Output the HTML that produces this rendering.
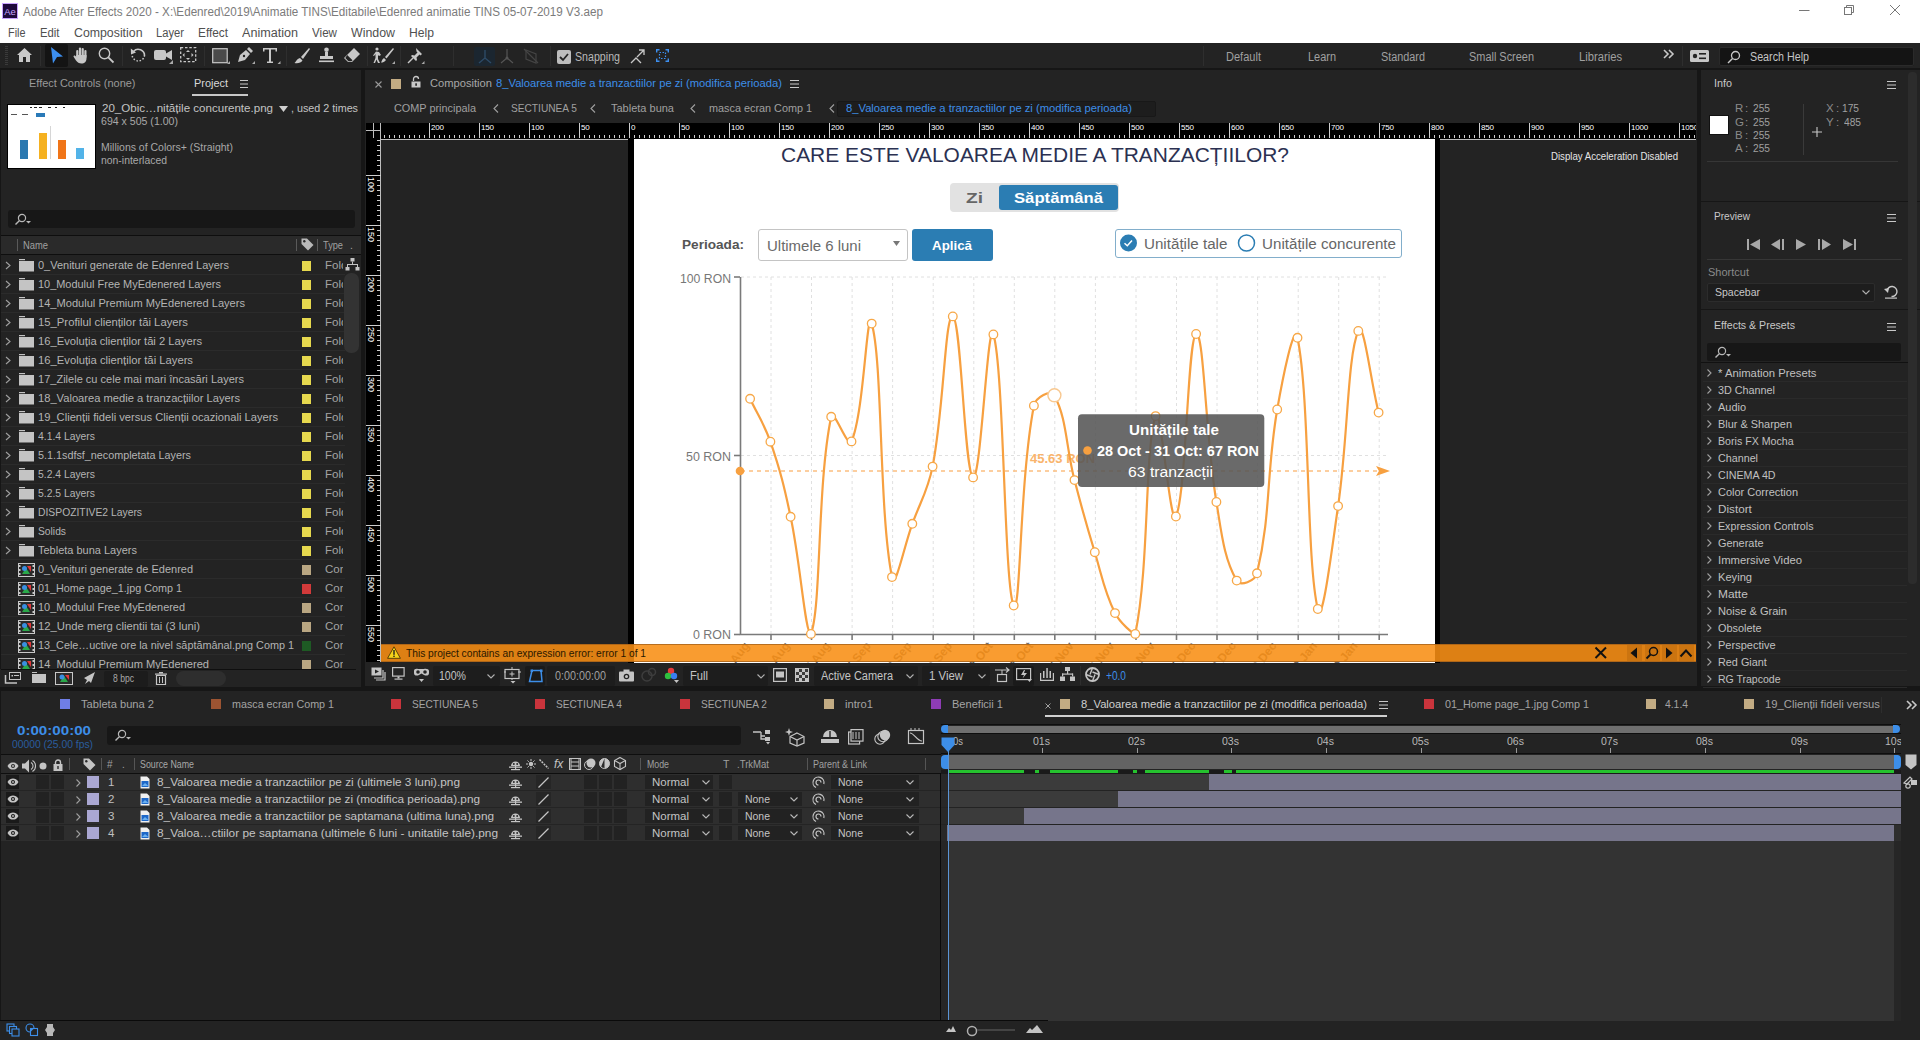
<!DOCTYPE html>
<html><head><meta charset="utf-8">
<style>
*{margin:0;padding:0;box-sizing:border-box}
html,body{width:1920px;height:1040px;overflow:hidden;background:#161616;font-family:"Liberation Sans",sans-serif;font-size:12px;color:#a8a8a8;position:relative}
.a{position:absolute}
.t{position:absolute;white-space:nowrap;line-height:1;transform-origin:0 0}
svg.a{overflow:visible}
#t1{transform:scaleX(0.9480)}#t2{transform:scaleX(0.8826)}#t3{transform:scaleX(0.9197)}#t4{transform:scaleX(1.0021)}#t5{transform:scaleX(0.9101)}#t6{transform:scaleX(0.9610)}#t7{transform:scaleX(1.0240)}#t8{transform:scaleX(0.9456)}#t9{transform:scaleX(1.0057)}#t10{transform:scaleX(0.9883)}#t11{transform:scaleX(0.8872)}#t12{transform:scaleX(0.9203)}#t13{transform:scaleX(0.9120)}#t14{transform:scaleX(0.9034)}#t15{transform:scaleX(0.9107)}#t16{transform:scaleX(0.9341)}#t17{transform:scaleX(0.8933)}#t18{transform:scaleX(0.9538)}#t19{transform:scaleX(0.9498)}#t20{transform:scaleX(1.0055)}#t21{transform:scaleX(0.9358)}#t22{transform:scaleX(0.9192)}#t23{transform:scaleX(0.9118)}#t24{transform:scaleX(0.9055)}#t25{transform:scaleX(0.8924)}#t26{transform:scaleX(0.8785)}#t28{transform:scaleX(0.9544)}#t30{transform:scaleX(0.9510)}#t32{transform:scaleX(0.9638)}#t34{transform:scaleX(0.9818)}#t36{transform:scaleX(0.9755)}#t38{transform:scaleX(0.9777)}#t40{transform:scaleX(0.9592)}#t42{transform:scaleX(0.9703)}#t44{transform:scaleX(0.9702)}#t46{transform:scaleX(0.9005)}#t48{transform:scaleX(0.9385)}#t50{transform:scaleX(0.9005)}#t52{transform:scaleX(0.9005)}#t54{transform:scaleX(0.8990)}#t56{transform:scaleX(0.8938)}#t58{transform:scaleX(0.9558)}#t60{transform:scaleX(0.9544)}#t62{transform:scaleX(0.9385)}#t64{transform:scaleX(0.9502)}#t66{transform:scaleX(0.9823)}#t68{transform:scaleX(0.9423)}#t70{transform:scaleX(0.9658)}#t72{transform:scaleX(0.8175)}#t73{transform:scaleX(0.9699)}#t74{transform:scaleX(0.9754)}#t75{transform:scaleX(0.9456)}#t76{transform:scaleX(0.8826)}#t77{transform:scaleX(0.9564)}#t78{transform:scaleX(0.9424)}#t79{transform:scaleX(0.9754)}#t80{transform:scaleX(0.9181)}#t81{transform:scaleX(1.0692)}#t82{transform:scaleX(1.2740)}#t83{transform:scaleX(1.1118)}#t84{transform:scaleX(1.0076)}#t85{transform:scaleX(1.0689)}#t86{transform:scaleX(0.9873)}#t87{transform:scaleX(1.0825)}#t88{transform:scaleX(1.0828)}#t89{transform:scaleX(1.0811)}#t90{transform:scaleX(1.0307)}#t91{transform:scaleX(1.1261)}#t92{transform:scaleX(0.9409)}#t93{transform:scaleX(0.9581)}#t94{transform:scaleX(0.9564)}#t95{transform:scaleX(0.9280)}#t96{transform:scaleX(0.8794)}#t97{transform:scaleX(0.8992)}#t98{transform:scaleX(0.9305)}#t99{transform:scaleX(0.9148)}#t100{transform:scaleX(0.9494)}#t101{transform:scaleX(0.8438)}#t102{transform:scaleX(0.9381)}#t105{transform:scaleX(0.8860)}#t108{transform:scaleX(0.8860)}#t111{transform:scaleX(0.8860)}#t114{transform:scaleX(0.8860)}#t117{transform:scaleX(0.8860)}#t120{transform:scaleX(0.8860)}#t121{transform:scaleX(0.8801)}#t122{transform:scaleX(0.9573)}#t123{transform:scaleX(0.9140)}#t124{transform:scaleX(0.9205)}#t125{transform:scaleX(0.9815)}#t126{transform:scaleX(0.9385)}#t127{transform:scaleX(0.9517)}#t128{transform:scaleX(0.9487)}#t129{transform:scaleX(0.9241)}#t130{transform:scaleX(0.9336)}#t131{transform:scaleX(0.9290)}#t132{transform:scaleX(0.9554)}#t133{transform:scaleX(1.0170)}#t134{transform:scaleX(0.9280)}#t135{transform:scaleX(0.9488)}#t136{transform:scaleX(0.9832)}#t137{transform:scaleX(0.9667)}#t138{transform:scaleX(1.0360)}#t139{transform:scaleX(0.9638)}#t140{transform:scaleX(0.9472)}#t141{transform:scaleX(0.9585)}#t142{transform:scaleX(0.9424)}#t143{transform:scaleX(0.9137)}#t144{transform:scaleX(0.9675)}#t145{transform:scaleX(0.9332)}#t146{transform:scaleX(0.8826)}#t147{transform:scaleX(0.8826)}#t148{transform:scaleX(0.8826)}#t149{transform:scaleX(0.9729)}#t150{transform:scaleX(0.9611)}#t151{transform:scaleX(0.9754)}#t152{transform:scaleX(0.9385)}#t153{transform:scaleX(0.8992)}#t154{transform:scaleX(0.9777)}#t155{transform:scaleX(1.1470)}#t156{transform:scaleX(0.9393)}#t159{transform:scaleX(0.8411)}#t161{transform:scaleX(0.8376)}#t163{transform:scaleX(0.9090)}#t164{transform:scaleX(0.8565)}#t166{transform:scaleX(1.0267)}#t167{transform:scaleX(0.9983)}#t168{transform:scaleX(0.9091)}#t170{transform:scaleX(1.0235)}#t171{transform:scaleX(0.9983)}#t172{transform:scaleX(0.9091)}#t173{transform:scaleX(0.9091)}#t175{transform:scaleX(1.0243)}#t176{transform:scaleX(0.9983)}#t177{transform:scaleX(0.9091)}#t178{transform:scaleX(0.9091)}#t180{transform:scaleX(1.0305)}#t181{transform:scaleX(0.9983)}#t182{transform:scaleX(0.9091)}#t183{transform:scaleX(0.9091)}#t184{transform:scaleX(0.9014)}#t185{transform:scaleX(1.0037)}#t186{transform:scaleX(1.0037)}#t187{transform:scaleX(1.0037)}#t188{transform:scaleX(1.0037)}#t189{transform:scaleX(1.0037)}#t190{transform:scaleX(1.0037)}#t191{transform:scaleX(1.0037)}#t192{transform:scaleX(1.0037)}#t193{transform:scaleX(1.0037)}#t194{transform:scaleX(1.0037)}
</style></head><body>
<div class="a" style="left:0px;top:0px;width:1920px;height:43px;background:#ffffff;"></div><svg class="a" style="left:2px;top:3px;" width="16" height="16" viewBox="0 0 16 16"><rect x="0.5" y="0.5" width="15" height="15" fill="#1f0a3c" stroke="#c9a3ff" stroke-width="1"/><text x="2.2" y="11.6" font-size="9.5" fill="#c8a8ff" font-family="Liberation Sans">Ae</text></svg><div id="t1" class="t" style="left:23px;top:5.59px;font-size:12.3px;color:#7b7b7b;">Adobe After Effects 2020 - X:\Edenred\2019\Animatie TINS\Editabile\Edenred animatie TINS 05-07-2019 V3.aep</div><div id="t2" class="t" style="left:7.5px;top:26.59px;font-size:12.3px;color:#505050;">File</div><div id="t3" class="t" style="left:39.5px;top:26.59px;font-size:12.3px;color:#505050;">Edit</div><div id="t4" class="t" style="left:73.5px;top:26.59px;font-size:12.3px;color:#505050;">Composition</div><div id="t5" class="t" style="left:156px;top:26.59px;font-size:12.3px;color:#505050;">Layer</div><div id="t6" class="t" style="left:198px;top:26.59px;font-size:12.3px;color:#505050;">Effect</div><div id="t7" class="t" style="left:242px;top:26.59px;font-size:12.3px;color:#505050;">Animation</div><div id="t8" class="t" style="left:312px;top:26.59px;font-size:12.3px;color:#505050;">View</div><div id="t9" class="t" style="left:351px;top:26.59px;font-size:12.3px;color:#505050;">Window</div><div id="t10" class="t" style="left:409px;top:26.59px;font-size:12.3px;color:#505050;">Help</div><svg class="a" style="left:1795px;top:0px;" width="110" height="22" viewBox="0 0 110 22"><line x1="4" y1="10.5" x2="14.5" y2="10.5" stroke="#777" stroke-width="1"/><rect x="49.5" y="7.5" width="7" height="7" fill="none" stroke="#777"/><path d="M51.5 7.5V5.5H58.5V12.5H56.5" fill="none" stroke="#777"/><path d="M95 5L105 15M105 5L95 15" stroke="#777" stroke-width="1"/></svg><div class="a" style="left:0px;top:43px;width:1920px;height:25px;background:#232323;"></div><svg class="a" style="left:5px;top:46px;" width="4" height="20" viewBox="0 0 4 20"><rect x="0" y="0" width="3" height="1" fill="#3a3a3a"/><rect x="0" y="2" width="3" height="1" fill="#3a3a3a"/><rect x="0" y="4" width="3" height="1" fill="#3a3a3a"/><rect x="0" y="6" width="3" height="1" fill="#3a3a3a"/><rect x="0" y="8" width="3" height="1" fill="#3a3a3a"/><rect x="0" y="10" width="3" height="1" fill="#3a3a3a"/><rect x="0" y="12" width="3" height="1" fill="#3a3a3a"/><rect x="0" y="14" width="3" height="1" fill="#3a3a3a"/><rect x="0" y="16" width="3" height="1" fill="#3a3a3a"/><rect x="0" y="18" width="3" height="1" fill="#3a3a3a"/></svg><svg class="a" style="left:16px;top:47px;" width="17" height="17" viewBox="0 0 17 17"><path d="M8.5 1L1 8H3V15H7V10H10V15H14V8H16Z" fill="#c8c8c8"/></svg><div class="a" style="left:40px;top:46px;width:1px;height:20px;background:#2e2e2e;"></div><div class="a" style="left:45px;top:44px;width:23px;height:23px;background:#141414;border-radius:2px"></div><svg class="a" style="left:50px;top:47px;" width="14" height="17" viewBox="0 0 14 17"><path d="M1 0L13 9.5L7 10L3 16.5Z" fill="#3d8ff0"/></svg><svg class="a" style="left:73px;top:47px;" width="16" height="17" viewBox="0 0 16 17"><rect x="3.2" y="3" width="2.2" height="8" rx="1.1" fill="#c8c8c8"/><rect x="5.9" y="0.5" width="2.2" height="9" rx="1.1" fill="#c8c8c8"/><rect x="8.6" y="1" width="2.2" height="9" rx="1.1" fill="#c8c8c8"/><rect x="11.3" y="3" width="2.2" height="8" rx="1.1" fill="#c8c8c8"/><path d="M3.2 8H13.5V11.5C13.5 14.5 11.5 16.5 8.5 16.5C6 16.5 4.5 15.5 3 13.5L0.6 9.8C0.2 9 1.3 8 2.2 8.8L3.5 10Z" fill="#c8c8c8"/></svg><svg class="a" style="left:98px;top:47px;" width="17" height="17" viewBox="0 0 17 17"><circle cx="6.5" cy="6.5" r="5.2" fill="none" stroke="#c8c8c8" stroke-width="1.4"/><line x1="10.3" y1="10.3" x2="15.5" y2="15.5" stroke="#c8c8c8" stroke-width="1.8"/></svg><div class="a" style="left:122px;top:46px;width:1px;height:20px;background:#2e2e2e;"></div><svg class="a" style="left:130px;top:47px;" width="17" height="17" viewBox="0 0 17 17"><path d="M2.2 9A6.3 6.3 0 0 0 14.5 9" fill="none" stroke="#c8c8c8" stroke-width="1.5" stroke-dasharray="1.5 1.7"/><path d="M3.5 4.5A6.3 6.3 0 0 1 14.5 9" fill="none" stroke="#c8c8c8" stroke-width="1.6"/><path d="M0.8 1.5L6 5.5L1 7.5Z" fill="#c8c8c8"/></svg><svg class="a" style="left:154px;top:47px;" width="20" height="18" viewBox="0 0 20 18"><rect x="0" y="3" width="12" height="10" rx="2" fill="#c8c8c8"/><path d="M12 6.5L18 3V13L12 9.5Z" fill="#c8c8c8"/><path d="M19 17V13L15 17Z" fill="#aaa"/></svg><svg class="a" style="left:180px;top:47px;" width="17" height="17" viewBox="0 0 17 17"><rect x="0.7" y="0.7" width="15" height="14" fill="none" stroke="#c8c8c8" stroke-width="1.3" stroke-dasharray="2.5 1.8"/><path d="M8 3L6 5H10ZM8 13L6 11H10ZM2.5 8L4.5 6V10ZM13.5 8L11.5 6V10Z" fill="#c8c8c8"/></svg><div class="a" style="left:204px;top:46px;width:1px;height:20px;background:#2e2e2e;"></div><svg class="a" style="left:212px;top:48px;" width="18" height="17" viewBox="0 0 18 17"><rect x="0.7" y="0.7" width="14.5" height="14" fill="#4a4a4a" stroke="#c8c8c8" stroke-width="1.2"/><path d="M18 16V13L15 16Z" fill="#aaa"/></svg><svg class="a" style="left:236px;top:47px;" width="20" height="18" viewBox="0 0 20 18"><path d="M2 15L4 8L10 3L14 7L9 13Z" fill="#c8c8c8"/><path d="M11 2L13 0L17 4L15 6Z" fill="#c8c8c8"/><circle cx="8" cy="9" r="1.2" fill="#232323"/><path d="M19 17V14L16 17Z" fill="#aaa"/></svg><svg class="a" style="left:262px;top:47px;" width="19" height="18" viewBox="0 0 19 18"><path d="M1 1H15V4.5H13.5V2.6H9V14.5H11V16H5V14.5H7V2.6H2.5V4.5H1Z" fill="#c8c8c8"/><path d="M18.5 17V14L15.5 17Z" fill="#aaa"/></svg><div class="a" style="left:286px;top:46px;width:1px;height:20px;background:#2e2e2e;"></div><svg class="a" style="left:293px;top:47px;" width="18" height="17" viewBox="0 0 18 17"><path d="M16 1L8 10L10 12L17 2Z" fill="#c8c8c8"/><path d="M7 11L9.5 13.5C8 16 5 16.5 1.5 16C3 15 3.5 12 7 11Z" fill="#c8c8c8"/></svg><svg class="a" style="left:318px;top:47px;" width="17" height="17" viewBox="0 0 17 17"><circle cx="8.5" cy="2.8" r="2.3" fill="#c8c8c8"/><path d="M7 5H10V9H15V12H2V9H7Z" fill="#c8c8c8"/><rect x="1" y="13.5" width="15" height="1.6" fill="#c8c8c8"/></svg><svg class="a" style="left:343px;top:47px;" width="18" height="17" viewBox="0 0 18 17"><path d="M11 1L17 7L9 15H5L1 11Z" fill="#c8c8c8"/><path d="M4.2 8L9.5 13.3L8.5 14.3H5.5L2.3 11Z" fill="#232323"/></svg><div class="a" style="left:367px;top:46px;width:1px;height:20px;background:#2e2e2e;"></div><svg class="a" style="left:373px;top:47px;" width="23" height="18" viewBox="0 0 23 18"><circle cx="4" cy="2" r="1.6" fill="#c8c8c8"/><path d="M3 4.5L6 5L8 8L6 9L5 8V12L7 16H5L3.5 12.5L2 16H0.5L2.5 11V7L1 9L0 8.5Z" fill="#c8c8c8"/><path d="M20 1L12 10L13.5 11.5L21 2Z" fill="#c8c8c8"/><path d="M11 11L13 13C11.5 15 10 15.5 8 15.5C9 14 9 12 11 11Z" fill="#c8c8c8"/><path d="M22 17V14L19 17Z" fill="#aaa"/></svg><div class="a" style="left:400px;top:46px;width:1px;height:20px;background:#2e2e2e;"></div><svg class="a" style="left:407px;top:47px;" width="18" height="18" viewBox="0 0 18 18"><path d="M9 1L15 7L13.5 8.5L12.5 7.5L9.5 10.5L10 13L9 14L4 9L5 8L7.5 8.5L10.5 5.5L9.5 4.5Z" fill="#c8c8c8"/><line x1="6" y1="11" x2="1" y2="16" stroke="#c8c8c8" stroke-width="1.5"/><path d="M17.5 17V14L14.5 17Z" fill="#aaa"/></svg><div class="a" style="left:453px;top:46px;width:1px;height:20px;background:#2e2e2e;"></div><div class="a" style="left:474px;top:47px;width:21px;height:19px;background:#1b2630;border-radius:2px"></div><svg class="a" style="left:476px;top:48px;" width="18" height="17" viewBox="0 0 18 17"><path d="M9 2V10L3 15M9 10L15 15" fill="none" stroke="#2c4a66" stroke-width="1.4"/></svg><svg class="a" style="left:499px;top:48px;" width="16" height="17" viewBox="0 0 16 17"><path d="M8 1V10L2 15M8 10L14 15" fill="none" stroke="#555" stroke-width="1.2"/><circle cx="8" cy="10" r="1.5" fill="#555"/></svg><svg class="a" style="left:523px;top:48px;" width="16" height="17" viewBox="0 0 16 17"><path d="M3 2L13 6V15L3 11Z" fill="none" stroke="#444" stroke-width="1.2"/><path d="M1 1L15 15" stroke="#444" stroke-width="1.2"/></svg><div class="a" style="left:550px;top:46px;width:1px;height:20px;background:#2e2e2e;"></div><svg class="a" style="left:557px;top:50px;" width="14" height="14" viewBox="0 0 14 14"><rect x="0" y="0" width="14" height="14" rx="2" fill="#bdbdbd"/><path d="M3 7L6 10L11 4" fill="none" stroke="#232323" stroke-width="1.8"/></svg><div id="t11" class="t" style="left:575px;top:50.84px;font-size:12px;color:#b8b8b8;">Snapping</div><svg class="a" style="left:630px;top:49px;" width="16" height="16" viewBox="0 0 16 16"><path d="M1 14L6 9L11 14" fill="none" stroke="#c8c8c8" stroke-width="1.3"/><path d="M7 8L14 1M9 1H14V6" fill="none" stroke="#c8c8c8" stroke-width="1.3"/></svg><svg class="a" style="left:656px;top:49px;" width="13" height="13" viewBox="0 0 13 13"><path d="M0.7 3.5V0.7H3.5M9.5 0.7H12.3V3.5M12.3 9.5V12.3H9.5M3.5 12.3H0.7V9.5" fill="none" stroke="#3d8ff0" stroke-width="1.4"/><rect x="3.5" y="3.5" width="6" height="6" fill="none" stroke="#3d8ff0" stroke-width="1.2" stroke-dasharray="1.5 1.5"/></svg><div class="a" style="left:1203px;top:46px;width:1px;height:20px;background:#2e2e2e;"></div><div id="t12" class="t" style="left:1226px;top:50.84px;font-size:12px;color:#a0a0a0;">Default</div><div id="t13" class="t" style="left:1308px;top:50.84px;font-size:12px;color:#a0a0a0;">Learn</div><div id="t14" class="t" style="left:1381px;top:50.84px;font-size:12px;color:#a0a0a0;">Standard</div><div id="t15" class="t" style="left:1469px;top:50.84px;font-size:12px;color:#a0a0a0;">Small Screen</div><div id="t16" class="t" style="left:1579px;top:50.84px;font-size:12px;color:#a0a0a0;">Libraries</div><svg class="a" style="left:1663px;top:49px;" width="11" height="10" viewBox="0 0 11 10"><path d="M1 1L5 5L1 9M6 1L10 5L6 9" fill="none" stroke="#c8c8c8" stroke-width="1.6"/></svg><div class="a" style="left:1682px;top:46px;width:1px;height:20px;background:#2e2e2e;"></div><svg class="a" style="left:1690px;top:50px;" width="19" height="13" viewBox="0 0 19 13"><rect x="0" y="0" width="19" height="12" rx="1.5" fill="#c8c8c8"/><circle cx="5" cy="6" r="2.2" fill="#232323"/><rect x="9" y="3" width="7" height="1.6" fill="#232323"/><rect x="9" y="7.5" width="7" height="1.6" fill="#232323"/></svg><div class="a" style="left:1719px;top:47px;width:195px;height:19px;background:#141414;border-radius:2px;border:1px solid #2a2a2a"></div><svg class="a" style="left:1727px;top:50px;" width="14" height="14" viewBox="0 0 14 14"><circle cx="8.5" cy="5.5" r="4" fill="none" stroke="#c8c8c8" stroke-width="1.3"/><line x1="5.5" y1="8.5" x2="1" y2="13" stroke="#c8c8c8" stroke-width="1.5"/></svg><div id="t17" class="t" style="left:1750px;top:50.84px;font-size:12px;color:#c4c4c4;">Search Help</div><div class="a" style="left:0px;top:68px;width:1920px;height:2px;background:#161616;"></div><div class="a" style="left:0px;top:70px;width:361px;height:617px;background:#232323;"></div><div class="a" style="left:0px;top:70px;width:1px;height:617px;background:#161616;"></div><div id="t18" class="t" style="left:28.5px;top:78.27px;font-size:11.5px;color:#9a9a9a;">Effect Controls (none)</div><div id="t19" class="t" style="left:194px;top:78.27px;font-size:11.5px;color:#d8d8d8;">Project</div><div class="a" style="left:192px;top:94px;width:56px;height:2px;background:#c8c8c8;"></div><svg class="a" style="left:240px;top:80px;" width="8" height="8" viewBox="0 0 8 8"><path d="M0 0.5H8M0 4H8M0 7.5H8" stroke="#c8c8c8" stroke-width="1"/></svg><div class="a" style="left:7px;top:103.5px;width:89px;height:65px;background:#000;"></div><div class="a" style="left:8px;top:104.5px;width:87px;height:63px;background:#fff;"></div><svg class="a" style="left:8px;top:104.5px;" width="87" height="63" viewBox="0 0 87 63"><g fill="#222"><rect x="22" y="2" width="2" height="1"/><rect x="26" y="2" width="3" height="1"/><rect x="31" y="2" width="3" height="1"/><rect x="40" y="2" width="3" height="1"/><rect x="47" y="2" width="2" height="1"/><rect x="55" y="2" width="2" height="1"/></g><rect x="28" y="8" width="9" height="4" fill="#2a7ab8"/><rect x="3" y="9" width="6" height="1" fill="#555"/><rect x="14" y="9" width="6" height="1" fill="#555"/><rect x="12" y="35" width="8" height="19" fill="#2a78b0"/><rect x="31" y="28" width="8" height="26" fill="#f5b120"/><rect x="50" y="35" width="8" height="19" fill="#f07518"/><rect x="68" y="43" width="8" height="11" fill="#52b3e8"/><rect x="42" y="21" width="0.6" height="33" fill="#bbb"/></svg><div id="t20" class="t" style="left:102px;top:102.77px;font-size:11.5px;color:#c4c4c4;">20_Obic…nitățile concurente.png</div><svg class="a" style="left:279px;top:106px;" width="9" height="6" viewBox="0 0 9 6"><path d="M0 0H9L4.5 6Z" fill="#d0d0d0"/></svg><div id="t21" class="t" style="left:291px;top:102.77px;font-size:11.5px;color:#c4c4c4;">, used 2 times</div><div id="t22" class="t" style="left:101px;top:116.27px;font-size:11.5px;color:#a8a8a8;">694 x 505 (1.00)</div><div id="t23" class="t" style="left:101px;top:142.27px;font-size:11.5px;color:#a8a8a8;">Millions of Colors+ (Straight)</div><div id="t24" class="t" style="left:101px;top:155.27px;font-size:11.5px;color:#a8a8a8;">non-interlaced</div><div class="a" style="left:8px;top:210px;width:347px;height:18px;background:#171717;border-radius:3px"></div><svg class="a" style="left:14px;top:213px;" width="18" height="13" viewBox="0 0 18 13"><circle cx="8" cy="5" r="3.6" fill="none" stroke="#b8b8b8" stroke-width="1.2"/><line x1="5.3" y1="7.7" x2="1.5" y2="11.5" stroke="#b8b8b8" stroke-width="1.4"/><path d="M12 8H17L14.5 10.5Z" fill="#b8b8b8"/></svg><div class="a" style="left:1px;top:235px;width:360px;height:20px;background:#2a2a2a;border-top:1px solid #0e0e0e;border-bottom:1px solid #0e0e0e"></div><div class="a" style="left:17px;top:239px;width:1px;height:12px;background:#5a5a5a;"></div><div id="t25" class="t" style="left:23px;top:240.11px;font-size:10.5px;color:#a0a0a0;">Name</div><div class="a" style="left:296px;top:239px;width:1px;height:12px;background:#5a5a5a;"></div><div class="a" style="left:317px;top:239px;width:1px;height:12px;background:#5a5a5a;"></div><svg class="a" style="left:301px;top:238px;" width="13" height="13" viewBox="0 0 13 13"><path d="M0.5 0.5H6L12.5 7L7 12.5L0.5 6Z" fill="#b8b8b8"/><circle cx="3.3" cy="3.3" r="1.2" fill="#2a2a2a"/></svg><div id="t26" class="t" style="left:323px;top:240.11px;font-size:10.5px;color:#a0a0a0;">Type</div><div id="t27" class="t" style="left:350px;top:240.11px;font-size:10.5px;color:#a0a0a0;">.</div><div class="a" style="left:0;top:255px;width:345px;height:414px;overflow:hidden"><div class="a" style="left:1px;top:0.5px;width:344px;height:19px;border-bottom:1px solid #2b2b2b"></div><svg class="a" style="left:5px;top:5.5px" width="6" height="9"><path d="M1 1L5 4.5L1 8" fill="none" stroke="#a0a0a0" stroke-width="1.1"/></svg><svg class="a" style="left:19px;top:3.5px" width="15" height="13"><rect x="0" y="0" width="6" height="1.2" fill="#c4c4c4"/><rect x="0" y="2" width="15" height="10.5" fill="#c4c4c4"/></svg><div class="a" style="left:302px;top:5.5px;width:9px;height:10px;background:#e6d84e"></div><div class="a" style="left:1px;top:19.5px;width:344px;height:19px;border-bottom:1px solid #2b2b2b"></div><svg class="a" style="left:5px;top:24.5px" width="6" height="9"><path d="M1 1L5 4.5L1 8" fill="none" stroke="#a0a0a0" stroke-width="1.1"/></svg><svg class="a" style="left:19px;top:22.5px" width="15" height="13"><rect x="0" y="0" width="6" height="1.2" fill="#c4c4c4"/><rect x="0" y="2" width="15" height="10.5" fill="#c4c4c4"/></svg><div class="a" style="left:302px;top:24.5px;width:9px;height:10px;background:#e6d84e"></div><div class="a" style="left:1px;top:38.5px;width:344px;height:19px;border-bottom:1px solid #2b2b2b"></div><svg class="a" style="left:5px;top:43.5px" width="6" height="9"><path d="M1 1L5 4.5L1 8" fill="none" stroke="#a0a0a0" stroke-width="1.1"/></svg><svg class="a" style="left:19px;top:41.5px" width="15" height="13"><rect x="0" y="0" width="6" height="1.2" fill="#c4c4c4"/><rect x="0" y="2" width="15" height="10.5" fill="#c4c4c4"/></svg><div class="a" style="left:302px;top:43.5px;width:9px;height:10px;background:#e6d84e"></div><div class="a" style="left:1px;top:57.5px;width:344px;height:19px;border-bottom:1px solid #2b2b2b"></div><svg class="a" style="left:5px;top:62.5px" width="6" height="9"><path d="M1 1L5 4.5L1 8" fill="none" stroke="#a0a0a0" stroke-width="1.1"/></svg><svg class="a" style="left:19px;top:60.5px" width="15" height="13"><rect x="0" y="0" width="6" height="1.2" fill="#c4c4c4"/><rect x="0" y="2" width="15" height="10.5" fill="#c4c4c4"/></svg><div class="a" style="left:302px;top:62.5px;width:9px;height:10px;background:#e6d84e"></div><div class="a" style="left:1px;top:76.5px;width:344px;height:19px;border-bottom:1px solid #2b2b2b"></div><svg class="a" style="left:5px;top:81.5px" width="6" height="9"><path d="M1 1L5 4.5L1 8" fill="none" stroke="#a0a0a0" stroke-width="1.1"/></svg><svg class="a" style="left:19px;top:79.5px" width="15" height="13"><rect x="0" y="0" width="6" height="1.2" fill="#c4c4c4"/><rect x="0" y="2" width="15" height="10.5" fill="#c4c4c4"/></svg><div class="a" style="left:302px;top:81.5px;width:9px;height:10px;background:#e6d84e"></div><div class="a" style="left:1px;top:95.5px;width:344px;height:19px;border-bottom:1px solid #2b2b2b"></div><svg class="a" style="left:5px;top:100.5px" width="6" height="9"><path d="M1 1L5 4.5L1 8" fill="none" stroke="#a0a0a0" stroke-width="1.1"/></svg><svg class="a" style="left:19px;top:98.5px" width="15" height="13"><rect x="0" y="0" width="6" height="1.2" fill="#c4c4c4"/><rect x="0" y="2" width="15" height="10.5" fill="#c4c4c4"/></svg><div class="a" style="left:302px;top:100.5px;width:9px;height:10px;background:#e6d84e"></div><div class="a" style="left:1px;top:114.5px;width:344px;height:19px;border-bottom:1px solid #2b2b2b"></div><svg class="a" style="left:5px;top:119.5px" width="6" height="9"><path d="M1 1L5 4.5L1 8" fill="none" stroke="#a0a0a0" stroke-width="1.1"/></svg><svg class="a" style="left:19px;top:117.5px" width="15" height="13"><rect x="0" y="0" width="6" height="1.2" fill="#c4c4c4"/><rect x="0" y="2" width="15" height="10.5" fill="#c4c4c4"/></svg><div class="a" style="left:302px;top:119.5px;width:9px;height:10px;background:#e6d84e"></div><div class="a" style="left:1px;top:133.5px;width:344px;height:19px;border-bottom:1px solid #2b2b2b"></div><svg class="a" style="left:5px;top:138.5px" width="6" height="9"><path d="M1 1L5 4.5L1 8" fill="none" stroke="#a0a0a0" stroke-width="1.1"/></svg><svg class="a" style="left:19px;top:136.5px" width="15" height="13"><rect x="0" y="0" width="6" height="1.2" fill="#c4c4c4"/><rect x="0" y="2" width="15" height="10.5" fill="#c4c4c4"/></svg><div class="a" style="left:302px;top:138.5px;width:9px;height:10px;background:#e6d84e"></div><div class="a" style="left:1px;top:152.5px;width:344px;height:19px;border-bottom:1px solid #2b2b2b"></div><svg class="a" style="left:5px;top:157.5px" width="6" height="9"><path d="M1 1L5 4.5L1 8" fill="none" stroke="#a0a0a0" stroke-width="1.1"/></svg><svg class="a" style="left:19px;top:155.5px" width="15" height="13"><rect x="0" y="0" width="6" height="1.2" fill="#c4c4c4"/><rect x="0" y="2" width="15" height="10.5" fill="#c4c4c4"/></svg><div class="a" style="left:302px;top:157.5px;width:9px;height:10px;background:#e6d84e"></div><div class="a" style="left:1px;top:171.5px;width:344px;height:19px;border-bottom:1px solid #2b2b2b"></div><svg class="a" style="left:5px;top:176.5px" width="6" height="9"><path d="M1 1L5 4.5L1 8" fill="none" stroke="#a0a0a0" stroke-width="1.1"/></svg><svg class="a" style="left:19px;top:174.5px" width="15" height="13"><rect x="0" y="0" width="6" height="1.2" fill="#c4c4c4"/><rect x="0" y="2" width="15" height="10.5" fill="#c4c4c4"/></svg><div class="a" style="left:302px;top:176.5px;width:9px;height:10px;background:#e6d84e"></div><div class="a" style="left:1px;top:190.5px;width:344px;height:19px;border-bottom:1px solid #2b2b2b"></div><svg class="a" style="left:5px;top:195.5px" width="6" height="9"><path d="M1 1L5 4.5L1 8" fill="none" stroke="#a0a0a0" stroke-width="1.1"/></svg><svg class="a" style="left:19px;top:193.5px" width="15" height="13"><rect x="0" y="0" width="6" height="1.2" fill="#c4c4c4"/><rect x="0" y="2" width="15" height="10.5" fill="#c4c4c4"/></svg><div class="a" style="left:302px;top:195.5px;width:9px;height:10px;background:#e6d84e"></div><div class="a" style="left:1px;top:209.5px;width:344px;height:19px;border-bottom:1px solid #2b2b2b"></div><svg class="a" style="left:5px;top:214.5px" width="6" height="9"><path d="M1 1L5 4.5L1 8" fill="none" stroke="#a0a0a0" stroke-width="1.1"/></svg><svg class="a" style="left:19px;top:212.5px" width="15" height="13"><rect x="0" y="0" width="6" height="1.2" fill="#c4c4c4"/><rect x="0" y="2" width="15" height="10.5" fill="#c4c4c4"/></svg><div class="a" style="left:302px;top:214.5px;width:9px;height:10px;background:#e6d84e"></div><div class="a" style="left:1px;top:228.5px;width:344px;height:19px;border-bottom:1px solid #2b2b2b"></div><svg class="a" style="left:5px;top:233.5px" width="6" height="9"><path d="M1 1L5 4.5L1 8" fill="none" stroke="#a0a0a0" stroke-width="1.1"/></svg><svg class="a" style="left:19px;top:231.5px" width="15" height="13"><rect x="0" y="0" width="6" height="1.2" fill="#c4c4c4"/><rect x="0" y="2" width="15" height="10.5" fill="#c4c4c4"/></svg><div class="a" style="left:302px;top:233.5px;width:9px;height:10px;background:#e6d84e"></div><div class="a" style="left:1px;top:247.5px;width:344px;height:19px;border-bottom:1px solid #2b2b2b"></div><svg class="a" style="left:5px;top:252.5px" width="6" height="9"><path d="M1 1L5 4.5L1 8" fill="none" stroke="#a0a0a0" stroke-width="1.1"/></svg><svg class="a" style="left:19px;top:250.5px" width="15" height="13"><rect x="0" y="0" width="6" height="1.2" fill="#c4c4c4"/><rect x="0" y="2" width="15" height="10.5" fill="#c4c4c4"/></svg><div class="a" style="left:302px;top:252.5px;width:9px;height:10px;background:#e6d84e"></div><div class="a" style="left:1px;top:266.5px;width:344px;height:19px;border-bottom:1px solid #2b2b2b"></div><svg class="a" style="left:5px;top:271.5px" width="6" height="9"><path d="M1 1L5 4.5L1 8" fill="none" stroke="#a0a0a0" stroke-width="1.1"/></svg><svg class="a" style="left:19px;top:269.5px" width="15" height="13"><rect x="0" y="0" width="6" height="1.2" fill="#c4c4c4"/><rect x="0" y="2" width="15" height="10.5" fill="#c4c4c4"/></svg><div class="a" style="left:302px;top:271.5px;width:9px;height:10px;background:#e6d84e"></div><div class="a" style="left:1px;top:285.5px;width:344px;height:19px;border-bottom:1px solid #2b2b2b"></div><svg class="a" style="left:5px;top:290.5px" width="6" height="9"><path d="M1 1L5 4.5L1 8" fill="none" stroke="#a0a0a0" stroke-width="1.1"/></svg><svg class="a" style="left:19px;top:288.5px" width="15" height="13"><rect x="0" y="0" width="6" height="1.2" fill="#c4c4c4"/><rect x="0" y="2" width="15" height="10.5" fill="#c4c4c4"/></svg><div class="a" style="left:302px;top:290.5px;width:9px;height:10px;background:#e6d84e"></div><div class="a" style="left:1px;top:304.5px;width:344px;height:19px;border-bottom:1px solid #2b2b2b"></div><svg class="a" style="left:18px;top:307.5px" width="17" height="14"><rect x="0.5" y="0.5" width="16" height="13" fill="#2a2a2a" stroke="#c8c8c8"/><rect x="0" y="2" width="2.5" height="2" fill="#c8c8c8"/><rect x="0" y="6" width="2.5" height="2" fill="#c8c8c8"/><rect x="0" y="10" width="2.5" height="2" fill="#c8c8c8"/><rect x="14.5" y="2" width="2.5" height="2" fill="#c8c8c8"/><rect x="14.5" y="6" width="2.5" height="2" fill="#c8c8c8"/><rect x="14.5" y="10" width="2.5" height="2" fill="#c8c8c8"/><path d="M4 11L8 5L12 11Z" fill="#2aa84a"/><circle cx="6.5" cy="5.5" r="2.5" fill="#3a8fe0"/><path d="M9 3H13V9Z" fill="#e0383a"/></svg><div class="a" style="left:302px;top:309.5px;width:9px;height:10px;background:#b9a682"></div><div class="a" style="left:1px;top:323.5px;width:344px;height:19px;border-bottom:1px solid #2b2b2b"></div><svg class="a" style="left:18px;top:326.5px" width="17" height="14"><rect x="0.5" y="0.5" width="16" height="13" fill="#2a2a2a" stroke="#c8c8c8"/><rect x="0" y="2" width="2.5" height="2" fill="#c8c8c8"/><rect x="0" y="6" width="2.5" height="2" fill="#c8c8c8"/><rect x="0" y="10" width="2.5" height="2" fill="#c8c8c8"/><rect x="14.5" y="2" width="2.5" height="2" fill="#c8c8c8"/><rect x="14.5" y="6" width="2.5" height="2" fill="#c8c8c8"/><rect x="14.5" y="10" width="2.5" height="2" fill="#c8c8c8"/><path d="M4 11L8 5L12 11Z" fill="#2aa84a"/><circle cx="6.5" cy="5.5" r="2.5" fill="#3a8fe0"/><path d="M9 3H13V9Z" fill="#e0383a"/></svg><div class="a" style="left:302px;top:328.5px;width:9px;height:10px;background:#d23a3a"></div><div class="a" style="left:1px;top:342.5px;width:344px;height:19px;border-bottom:1px solid #2b2b2b"></div><svg class="a" style="left:18px;top:345.5px" width="17" height="14"><rect x="0.5" y="0.5" width="16" height="13" fill="#2a2a2a" stroke="#c8c8c8"/><rect x="0" y="2" width="2.5" height="2" fill="#c8c8c8"/><rect x="0" y="6" width="2.5" height="2" fill="#c8c8c8"/><rect x="0" y="10" width="2.5" height="2" fill="#c8c8c8"/><rect x="14.5" y="2" width="2.5" height="2" fill="#c8c8c8"/><rect x="14.5" y="6" width="2.5" height="2" fill="#c8c8c8"/><rect x="14.5" y="10" width="2.5" height="2" fill="#c8c8c8"/><path d="M4 11L8 5L12 11Z" fill="#2aa84a"/><circle cx="6.5" cy="5.5" r="2.5" fill="#3a8fe0"/><path d="M9 3H13V9Z" fill="#e0383a"/></svg><div class="a" style="left:302px;top:347.5px;width:9px;height:10px;background:#b9a682"></div><div class="a" style="left:1px;top:361.5px;width:344px;height:19px;border-bottom:1px solid #2b2b2b"></div><svg class="a" style="left:18px;top:364.5px" width="17" height="14"><rect x="0.5" y="0.5" width="16" height="13" fill="#2a2a2a" stroke="#c8c8c8"/><rect x="0" y="2" width="2.5" height="2" fill="#c8c8c8"/><rect x="0" y="6" width="2.5" height="2" fill="#c8c8c8"/><rect x="0" y="10" width="2.5" height="2" fill="#c8c8c8"/><rect x="14.5" y="2" width="2.5" height="2" fill="#c8c8c8"/><rect x="14.5" y="6" width="2.5" height="2" fill="#c8c8c8"/><rect x="14.5" y="10" width="2.5" height="2" fill="#c8c8c8"/><path d="M4 11L8 5L12 11Z" fill="#2aa84a"/><circle cx="6.5" cy="5.5" r="2.5" fill="#3a8fe0"/><path d="M9 3H13V9Z" fill="#e0383a"/></svg><div class="a" style="left:302px;top:366.5px;width:9px;height:10px;background:#b9a682"></div><div class="a" style="left:1px;top:380.5px;width:344px;height:19px;border-bottom:1px solid #2b2b2b"></div><svg class="a" style="left:18px;top:383.5px" width="17" height="14"><rect x="0.5" y="0.5" width="16" height="13" fill="#2a2a2a" stroke="#c8c8c8"/><rect x="0" y="2" width="2.5" height="2" fill="#c8c8c8"/><rect x="0" y="6" width="2.5" height="2" fill="#c8c8c8"/><rect x="0" y="10" width="2.5" height="2" fill="#c8c8c8"/><rect x="14.5" y="2" width="2.5" height="2" fill="#c8c8c8"/><rect x="14.5" y="6" width="2.5" height="2" fill="#c8c8c8"/><rect x="14.5" y="10" width="2.5" height="2" fill="#c8c8c8"/><path d="M4 11L8 5L12 11Z" fill="#2aa84a"/><circle cx="6.5" cy="5.5" r="2.5" fill="#3a8fe0"/><path d="M9 3H13V9Z" fill="#e0383a"/></svg><div class="a" style="left:302px;top:385.5px;width:9px;height:10px;background:#1e5a24"></div><div class="a" style="left:1px;top:399.5px;width:344px;height:19px;border-bottom:1px solid #2b2b2b"></div><svg class="a" style="left:18px;top:402.5px" width="17" height="14"><rect x="0.5" y="0.5" width="16" height="13" fill="#2a2a2a" stroke="#c8c8c8"/><rect x="0" y="2" width="2.5" height="2" fill="#c8c8c8"/><rect x="0" y="6" width="2.5" height="2" fill="#c8c8c8"/><rect x="0" y="10" width="2.5" height="2" fill="#c8c8c8"/><rect x="14.5" y="2" width="2.5" height="2" fill="#c8c8c8"/><rect x="14.5" y="6" width="2.5" height="2" fill="#c8c8c8"/><rect x="14.5" y="10" width="2.5" height="2" fill="#c8c8c8"/><path d="M4 11L8 5L12 11Z" fill="#2aa84a"/><circle cx="6.5" cy="5.5" r="2.5" fill="#3a8fe0"/><path d="M9 3H13V9Z" fill="#e0383a"/></svg><div class="a" style="left:302px;top:404.5px;width:9px;height:10px;background:#b9a682"></div></div><div id="t28" class="t" style="left:38px;top:259.77px;font-size:11.5px;color:#b4b4b4;clip-path:inset(-5px -5px -5px -5px)">0_Venituri generate de Edenred Layers</div><div id="t29" class="t" style="left:325px;top:259.77px;font-size:11.5px;color:#a4a4a4;width:18px;overflow:hidden">Fold</div><div id="t30" class="t" style="left:38px;top:278.77px;font-size:11.5px;color:#b4b4b4;clip-path:inset(-5px -5px -5px -5px)">10_Modulul Free MyEdenered Layers</div><div id="t31" class="t" style="left:325px;top:278.77px;font-size:11.5px;color:#a4a4a4;width:18px;overflow:hidden">Fold</div><div id="t32" class="t" style="left:38px;top:297.77px;font-size:11.5px;color:#b4b4b4;clip-path:inset(-5px -5px -5px -5px)">14_Modulul Premium MyEdenered Layers</div><div id="t33" class="t" style="left:325px;top:297.77px;font-size:11.5px;color:#a4a4a4;width:18px;overflow:hidden">Fold</div><div id="t34" class="t" style="left:38px;top:316.77px;font-size:11.5px;color:#b4b4b4;clip-path:inset(-5px -5px -5px -5px)">15_Profilul clienților tăi Layers</div><div id="t35" class="t" style="left:325px;top:316.77px;font-size:11.5px;color:#a4a4a4;width:18px;overflow:hidden">Fold</div><div id="t36" class="t" style="left:38px;top:335.77px;font-size:11.5px;color:#b4b4b4;clip-path:inset(-5px -5px -5px -5px)">16_Evoluția clienților tăi 2 Layers</div><div id="t37" class="t" style="left:325px;top:335.77px;font-size:11.5px;color:#a4a4a4;width:18px;overflow:hidden">Fold</div><div id="t38" class="t" style="left:38px;top:354.77px;font-size:11.5px;color:#b4b4b4;clip-path:inset(-5px -5px -5px -5px)">16_Evoluția clienților tăi Layers</div><div id="t39" class="t" style="left:325px;top:354.77px;font-size:11.5px;color:#a4a4a4;width:18px;overflow:hidden">Fold</div><div id="t40" class="t" style="left:38px;top:373.77px;font-size:11.5px;color:#b4b4b4;clip-path:inset(-5px -5px -5px -5px)">17_Zilele cu cele mai mari încasări Layers</div><div id="t41" class="t" style="left:325px;top:373.77px;font-size:11.5px;color:#a4a4a4;width:18px;overflow:hidden">Fold</div><div id="t42" class="t" style="left:38px;top:392.77px;font-size:11.5px;color:#b4b4b4;clip-path:inset(-5px -5px -5px -5px)">18_Valoarea medie a tranzacțiilor Layers</div><div id="t43" class="t" style="left:325px;top:392.77px;font-size:11.5px;color:#a4a4a4;width:18px;overflow:hidden">Fold</div><div id="t44" class="t" style="left:38px;top:411.77px;font-size:11.5px;color:#b4b4b4;clip-path:inset(-5px -5px -5px -5px)">19_Clienții fideli versus Clienții ocazionali Layers</div><div id="t45" class="t" style="left:325px;top:411.77px;font-size:11.5px;color:#a4a4a4;width:18px;overflow:hidden">Fold</div><div id="t46" class="t" style="left:38px;top:430.77px;font-size:11.5px;color:#b4b4b4;clip-path:inset(-5px -5px -5px -5px)">4.1.4 Layers</div><div id="t47" class="t" style="left:325px;top:430.77px;font-size:11.5px;color:#a4a4a4;width:18px;overflow:hidden">Fold</div><div id="t48" class="t" style="left:38px;top:449.77px;font-size:11.5px;color:#b4b4b4;clip-path:inset(-5px -5px -5px -5px)">5.1.1sdfsf_necompletata Layers</div><div id="t49" class="t" style="left:325px;top:449.77px;font-size:11.5px;color:#a4a4a4;width:18px;overflow:hidden">Fold</div><div id="t50" class="t" style="left:38px;top:468.77px;font-size:11.5px;color:#b4b4b4;clip-path:inset(-5px -5px -5px -5px)">5.2.4 Layers</div><div id="t51" class="t" style="left:325px;top:468.77px;font-size:11.5px;color:#a4a4a4;width:18px;overflow:hidden">Fold</div><div id="t52" class="t" style="left:38px;top:487.77px;font-size:11.5px;color:#b4b4b4;clip-path:inset(-5px -5px -5px -5px)">5.2.5 Layers</div><div id="t53" class="t" style="left:325px;top:487.77px;font-size:11.5px;color:#a4a4a4;width:18px;overflow:hidden">Fold</div><div id="t54" class="t" style="left:38px;top:506.77px;font-size:11.5px;color:#b4b4b4;clip-path:inset(-5px -5px -5px -5px)">DISPOZITIVE2 Layers</div><div id="t55" class="t" style="left:325px;top:506.77px;font-size:11.5px;color:#a4a4a4;width:18px;overflow:hidden">Fold</div><div id="t56" class="t" style="left:38px;top:525.77px;font-size:11.5px;color:#b4b4b4;clip-path:inset(-5px -5px -5px -5px)">Solids</div><div id="t57" class="t" style="left:325px;top:525.77px;font-size:11.5px;color:#a4a4a4;width:18px;overflow:hidden">Fold</div><div id="t58" class="t" style="left:38px;top:544.77px;font-size:11.5px;color:#b4b4b4;clip-path:inset(-5px -5px -5px -5px)">Tebleta buna Layers</div><div id="t59" class="t" style="left:325px;top:544.77px;font-size:11.5px;color:#a4a4a4;width:18px;overflow:hidden">Fold</div><div id="t60" class="t" style="left:38px;top:563.77px;font-size:11.5px;color:#b4b4b4;clip-path:inset(-5px -5px -5px -5px)">0_Venituri generate de Edenred</div><div id="t61" class="t" style="left:325px;top:563.77px;font-size:11.5px;color:#a4a4a4;width:18px;overflow:hidden">Comp</div><div id="t62" class="t" style="left:38px;top:582.77px;font-size:11.5px;color:#b4b4b4;clip-path:inset(-5px -5px -5px -5px)">01_Home page_1.jpg Comp 1</div><div id="t63" class="t" style="left:325px;top:582.77px;font-size:11.5px;color:#a4a4a4;width:18px;overflow:hidden">Comp</div><div id="t64" class="t" style="left:38px;top:601.77px;font-size:11.5px;color:#b4b4b4;clip-path:inset(-5px -5px -5px -5px)">10_Modulul Free MyEdenered</div><div id="t65" class="t" style="left:325px;top:601.77px;font-size:11.5px;color:#a4a4a4;width:18px;overflow:hidden">Comp</div><div id="t66" class="t" style="left:38px;top:620.77px;font-size:11.5px;color:#b4b4b4;clip-path:inset(-5px -5px -5px -5px)">12_Unde merg clientii tai (3 luni)</div><div id="t67" class="t" style="left:325px;top:620.77px;font-size:11.5px;color:#a4a4a4;width:18px;overflow:hidden">Comp</div><div id="t68" class="t" style="left:38px;top:639.77px;font-size:11.5px;color:#b4b4b4;clip-path:inset(-5px -5px -5px -5px)">13_Cele…uctive ore la nivel săptămânal.png Comp 1</div><div id="t69" class="t" style="left:325px;top:639.77px;font-size:11.5px;color:#a4a4a4;width:18px;overflow:hidden">Comp</div><div id="t70" class="t" style="left:38px;top:658.77px;font-size:11.5px;color:#b4b4b4;clip-path:inset(-5px -5px -5px -5px)">14_Modulul Premium MyEdenered</div><div id="t71" class="t" style="left:325px;top:658.77px;font-size:11.5px;color:#a4a4a4;width:18px;overflow:hidden">Comp</div><div class="a" style="left:0px;top:669px;width:361px;height:18px;background:#232323;"></div><div class="a" style="left:1px;top:669px;width:355px;height:1px;background:#0f0f0f;"></div><div class="a" style="left:345px;top:257px;width:13px;height:412px;background:#232323;"></div><div class="a" style="left:344px;top:273px;width:15px;height:80px;background:#333333;border-radius:7px"></div><svg class="a" style="left:346px;top:258px;" width="13" height="13" viewBox="0 0 13 13"><rect x="4.5" y="0" width="4" height="3.5" fill="#c4c4c4"/><rect x="6" y="3.5" width="1" height="3" fill="#c4c4c4"/><rect x="1" y="6" width="11" height="1" fill="#c4c4c4"/><rect x="1" y="6" width="1" height="3" fill="#c4c4c4"/><rect x="11" y="6" width="1" height="3" fill="#c4c4c4"/><rect x="-0.5" y="9" width="4" height="3.5" fill="#c4c4c4"/><rect x="9.5" y="9" width="4" height="3.5" fill="#c4c4c4"/></svg><svg class="a" style="left:5px;top:672px;" width="16" height="13" viewBox="0 0 16 13"><rect x="4.5" y="0.5" width="11" height="7" fill="none" stroke="#c4c4c4"/><rect x="6.5" y="3" width="1.5" height="1.5" fill="#c4c4c4"/><rect x="9" y="3" width="5" height="1" fill="#c4c4c4"/><path d="M0.5 3V11H12" fill="none" stroke="#c4c4c4" stroke-width="1.5"/></svg><svg class="a" style="left:32px;top:672px;" width="14" height="11" viewBox="0 0 14 11"><rect x="0" y="0" width="5" height="1" fill="#c4c4c4"/><rect x="0" y="2" width="14" height="9" fill="#c4c4c4"/></svg><svg class="a" style="left:55px;top:672px;" width="18" height="13" viewBox="0 0 18 13"><rect x="0.5" y="0.5" width="17" height="12" fill="#2a2a2a" stroke="#c8c8c8"/><path d="M5 10L9 4L13 10Z" fill="#2aa84a"/><circle cx="7" cy="5" r="2.5" fill="#3a8fe0"/><path d="M10 3H14V8Z" fill="#e0383a"/></svg><svg class="a" style="left:82px;top:672px;" width="14" height="13" viewBox="0 0 14 13"><path d="M13 0L2 6L5 8L3 12L7 9L9 11Z" fill="#c4c4c4"/></svg><div class="a" style="left:104px;top:671px;width:44px;height:16px;background:#1c1c1c;border-radius:2px"></div><div id="t72" class="t" style="left:113px;top:673.11px;font-size:10.5px;color:#a8a8a8;">8 bpc</div><svg class="a" style="left:155px;top:672px;" width="12" height="13" viewBox="0 0 12 13"><rect x="0" y="1.5" width="12" height="1.2" fill="#c4c4c4"/><rect x="4" y="0" width="4" height="1.5" fill="#c4c4c4"/><path d="M1.5 3.5H10.5V12.5H1.5Z" fill="none" stroke="#c4c4c4" stroke-width="1.2"/><path d="M4.5 5V11M7.5 5V11" stroke="#c4c4c4"/></svg><div class="a" style="left:176px;top:671px;width:50px;height:15px;background:#2e2e2e;border-radius:8px"></div><div class="a" style="left:365px;top:70px;width:1332px;height:617px;background:#232323;"></div><svg class="a" style="left:375px;top:81px;" width="7" height="7" viewBox="0 0 7 7"><path d="M0.5 0.5L6.5 6.5M6.5 0.5L0.5 6.5" stroke="#9a9a9a" stroke-width="1.1"/></svg><div class="a" style="left:391px;top:79px;width:10px;height:10px;background:#c2ab83;"></div><svg class="a" style="left:411px;top:76px;" width="10" height="12" viewBox="0 0 10 12"><path d="M2.5 5V3a2.5 2.5 0 0 1 5 0" fill="none" stroke="#c8c8c8" stroke-width="1.3"/><rect x="0.5" y="5.5" width="9" height="6" fill="#c8c8c8"/><rect x="4.3" y="7.3" width="1.6" height="2.5" fill="#232323"/></svg><div id="t73" class="t" style="left:430px;top:78.27px;font-size:11.5px;color:#a8a8a8;">Composition</div><div id="t74" class="t" style="left:496px;top:78.27px;font-size:11.5px;color:#3d8ee8;">8_Valoarea medie a tranzactiilor pe zi (modifica perioada)</div><svg class="a" style="left:790px;top:80px;" width="9" height="8" viewBox="0 0 9 8"><path d="M0 0.5H9M0 4H9M0 7.5H9" stroke="#c8c8c8" stroke-width="1"/></svg><div id="t75" class="t" style="left:394px;top:102.97px;font-size:11.5px;color:#a0a0a0;">COMP principala</div><div id="t76" class="t" style="left:511px;top:102.97px;font-size:11.5px;color:#a0a0a0;">SECTIUNEA 5</div><div id="t77" class="t" style="left:611px;top:102.97px;font-size:11.5px;color:#a0a0a0;">Tableta buna</div><div id="t78" class="t" style="left:709px;top:102.97px;font-size:11.5px;color:#a0a0a0;">masca ecran Comp 1</div><svg class="a" style="left:493px;top:104px;" width="6" height="9" viewBox="0 0 6 9"><path d="M5 0.5L1 4.5L5 8.5" fill="none" stroke="#a0a0a0" stroke-width="1.1"/></svg><svg class="a" style="left:590px;top:104px;" width="6" height="9" viewBox="0 0 6 9"><path d="M5 0.5L1 4.5L5 8.5" fill="none" stroke="#a0a0a0" stroke-width="1.1"/></svg><svg class="a" style="left:690px;top:104px;" width="6" height="9" viewBox="0 0 6 9"><path d="M5 0.5L1 4.5L5 8.5" fill="none" stroke="#a0a0a0" stroke-width="1.1"/></svg><svg class="a" style="left:829px;top:104px;" width="6" height="9" viewBox="0 0 6 9"><path d="M5 0.5L1 4.5L5 8.5" fill="none" stroke="#a0a0a0" stroke-width="1.1"/></svg><div class="a" style="left:836.5px;top:100.8px;width:319px;height:16px;background:#1d1d1d;border:1px solid #181818;border-radius:2px"></div><div id="t79" class="t" style="left:846px;top:102.97px;font-size:11.5px;color:#3d8ee8;">8_Valoarea medie a tranzactiilor pe zi (modifica perioada)</div><div class="a" style="left:366px;top:123px;width:1330px;height:16px;background:#000;"></div><div class="a" style="left:366px;top:138.5px;width:1330px;height:1px;background:#bdbdbd;"></div><div class="a" style="left:366px;top:139px;width:15px;height:523px;background:#000;"></div><div class="a" style="left:380px;top:123px;width:1px;height:539px;background:#bdbdbd;"></div><svg class="a" style="left:366px;top:123px;overflow:hidden" width="1330" height="16" viewBox="0 0 1330 16"><rect x="18" y="12" width="1" height="3" fill="#cfcfcf"/><rect x="23" y="12" width="1" height="3" fill="#cfcfcf"/><rect x="28" y="12" width="1" height="3" fill="#cfcfcf"/><rect x="33" y="12" width="1" height="3" fill="#cfcfcf"/><rect x="38" y="12" width="1" height="3" fill="#cfcfcf"/><rect x="43" y="12" width="1" height="3" fill="#cfcfcf"/><rect x="48" y="12" width="1" height="3" fill="#cfcfcf"/><rect x="53" y="12" width="1" height="3" fill="#cfcfcf"/><rect x="58" y="12" width="1" height="3" fill="#cfcfcf"/><rect x="63" y="0" width="1" height="15" fill="#cfcfcf"/><rect x="68" y="12" width="1" height="3" fill="#cfcfcf"/><rect x="73" y="12" width="1" height="3" fill="#cfcfcf"/><rect x="78" y="12" width="1" height="3" fill="#cfcfcf"/><rect x="83" y="12" width="1" height="3" fill="#cfcfcf"/><rect x="88" y="12" width="1" height="3" fill="#cfcfcf"/><rect x="93" y="12" width="1" height="3" fill="#cfcfcf"/><rect x="98" y="12" width="1" height="3" fill="#cfcfcf"/><rect x="103" y="12" width="1" height="3" fill="#cfcfcf"/><rect x="108" y="12" width="1" height="3" fill="#cfcfcf"/><rect x="113" y="0" width="1" height="15" fill="#cfcfcf"/><rect x="118" y="12" width="1" height="3" fill="#cfcfcf"/><rect x="123" y="12" width="1" height="3" fill="#cfcfcf"/><rect x="128" y="12" width="1" height="3" fill="#cfcfcf"/><rect x="133" y="12" width="1" height="3" fill="#cfcfcf"/><rect x="138" y="12" width="1" height="3" fill="#cfcfcf"/><rect x="143" y="12" width="1" height="3" fill="#cfcfcf"/><rect x="148" y="12" width="1" height="3" fill="#cfcfcf"/><rect x="153" y="12" width="1" height="3" fill="#cfcfcf"/><rect x="158" y="12" width="1" height="3" fill="#cfcfcf"/><rect x="163" y="0" width="1" height="15" fill="#cfcfcf"/><rect x="168" y="12" width="1" height="3" fill="#cfcfcf"/><rect x="173" y="12" width="1" height="3" fill="#cfcfcf"/><rect x="178" y="12" width="1" height="3" fill="#cfcfcf"/><rect x="183" y="12" width="1" height="3" fill="#cfcfcf"/><rect x="188" y="12" width="1" height="3" fill="#cfcfcf"/><rect x="193" y="12" width="1" height="3" fill="#cfcfcf"/><rect x="198" y="12" width="1" height="3" fill="#cfcfcf"/><rect x="203" y="12" width="1" height="3" fill="#cfcfcf"/><rect x="208" y="12" width="1" height="3" fill="#cfcfcf"/><rect x="213" y="0" width="1" height="15" fill="#cfcfcf"/><rect x="218" y="12" width="1" height="3" fill="#cfcfcf"/><rect x="223" y="12" width="1" height="3" fill="#cfcfcf"/><rect x="228" y="12" width="1" height="3" fill="#cfcfcf"/><rect x="233" y="12" width="1" height="3" fill="#cfcfcf"/><rect x="238" y="12" width="1" height="3" fill="#cfcfcf"/><rect x="243" y="12" width="1" height="3" fill="#cfcfcf"/><rect x="248" y="12" width="1" height="3" fill="#cfcfcf"/><rect x="253" y="12" width="1" height="3" fill="#cfcfcf"/><rect x="258" y="12" width="1" height="3" fill="#cfcfcf"/><rect x="263" y="0" width="1" height="15" fill="#cfcfcf"/><rect x="268" y="12" width="1" height="3" fill="#cfcfcf"/><rect x="273" y="12" width="1" height="3" fill="#cfcfcf"/><rect x="278" y="12" width="1" height="3" fill="#cfcfcf"/><rect x="283" y="12" width="1" height="3" fill="#cfcfcf"/><rect x="288" y="12" width="1" height="3" fill="#cfcfcf"/><rect x="293" y="12" width="1" height="3" fill="#cfcfcf"/><rect x="298" y="12" width="1" height="3" fill="#cfcfcf"/><rect x="303" y="12" width="1" height="3" fill="#cfcfcf"/><rect x="308" y="12" width="1" height="3" fill="#cfcfcf"/><rect x="313" y="0" width="1" height="15" fill="#cfcfcf"/><rect x="318" y="12" width="1" height="3" fill="#cfcfcf"/><rect x="323" y="12" width="1" height="3" fill="#cfcfcf"/><rect x="328" y="12" width="1" height="3" fill="#cfcfcf"/><rect x="333" y="12" width="1" height="3" fill="#cfcfcf"/><rect x="338" y="12" width="1" height="3" fill="#cfcfcf"/><rect x="343" y="12" width="1" height="3" fill="#cfcfcf"/><rect x="348" y="12" width="1" height="3" fill="#cfcfcf"/><rect x="353" y="12" width="1" height="3" fill="#cfcfcf"/><rect x="358" y="12" width="1" height="3" fill="#cfcfcf"/><rect x="363" y="0" width="1" height="15" fill="#cfcfcf"/><rect x="368" y="12" width="1" height="3" fill="#cfcfcf"/><rect x="373" y="12" width="1" height="3" fill="#cfcfcf"/><rect x="378" y="12" width="1" height="3" fill="#cfcfcf"/><rect x="383" y="12" width="1" height="3" fill="#cfcfcf"/><rect x="388" y="12" width="1" height="3" fill="#cfcfcf"/><rect x="393" y="12" width="1" height="3" fill="#cfcfcf"/><rect x="398" y="12" width="1" height="3" fill="#cfcfcf"/><rect x="403" y="12" width="1" height="3" fill="#cfcfcf"/><rect x="408" y="12" width="1" height="3" fill="#cfcfcf"/><rect x="413" y="0" width="1" height="15" fill="#cfcfcf"/><rect x="418" y="12" width="1" height="3" fill="#cfcfcf"/><rect x="423" y="12" width="1" height="3" fill="#cfcfcf"/><rect x="428" y="12" width="1" height="3" fill="#cfcfcf"/><rect x="433" y="12" width="1" height="3" fill="#cfcfcf"/><rect x="438" y="12" width="1" height="3" fill="#cfcfcf"/><rect x="443" y="12" width="1" height="3" fill="#cfcfcf"/><rect x="448" y="12" width="1" height="3" fill="#cfcfcf"/><rect x="453" y="12" width="1" height="3" fill="#cfcfcf"/><rect x="458" y="12" width="1" height="3" fill="#cfcfcf"/><rect x="463" y="0" width="1" height="15" fill="#cfcfcf"/><rect x="468" y="12" width="1" height="3" fill="#cfcfcf"/><rect x="473" y="12" width="1" height="3" fill="#cfcfcf"/><rect x="478" y="12" width="1" height="3" fill="#cfcfcf"/><rect x="483" y="12" width="1" height="3" fill="#cfcfcf"/><rect x="488" y="12" width="1" height="3" fill="#cfcfcf"/><rect x="493" y="12" width="1" height="3" fill="#cfcfcf"/><rect x="498" y="12" width="1" height="3" fill="#cfcfcf"/><rect x="503" y="12" width="1" height="3" fill="#cfcfcf"/><rect x="508" y="12" width="1" height="3" fill="#cfcfcf"/><rect x="513" y="0" width="1" height="15" fill="#cfcfcf"/><rect x="518" y="12" width="1" height="3" fill="#cfcfcf"/><rect x="523" y="12" width="1" height="3" fill="#cfcfcf"/><rect x="528" y="12" width="1" height="3" fill="#cfcfcf"/><rect x="533" y="12" width="1" height="3" fill="#cfcfcf"/><rect x="538" y="12" width="1" height="3" fill="#cfcfcf"/><rect x="543" y="12" width="1" height="3" fill="#cfcfcf"/><rect x="548" y="12" width="1" height="3" fill="#cfcfcf"/><rect x="553" y="12" width="1" height="3" fill="#cfcfcf"/><rect x="558" y="12" width="1" height="3" fill="#cfcfcf"/><rect x="563" y="0" width="1" height="15" fill="#cfcfcf"/><rect x="568" y="12" width="1" height="3" fill="#cfcfcf"/><rect x="573" y="12" width="1" height="3" fill="#cfcfcf"/><rect x="578" y="12" width="1" height="3" fill="#cfcfcf"/><rect x="583" y="12" width="1" height="3" fill="#cfcfcf"/><rect x="588" y="12" width="1" height="3" fill="#cfcfcf"/><rect x="593" y="12" width="1" height="3" fill="#cfcfcf"/><rect x="598" y="12" width="1" height="3" fill="#cfcfcf"/><rect x="603" y="12" width="1" height="3" fill="#cfcfcf"/><rect x="608" y="12" width="1" height="3" fill="#cfcfcf"/><rect x="613" y="0" width="1" height="15" fill="#cfcfcf"/><rect x="618" y="12" width="1" height="3" fill="#cfcfcf"/><rect x="623" y="12" width="1" height="3" fill="#cfcfcf"/><rect x="628" y="12" width="1" height="3" fill="#cfcfcf"/><rect x="633" y="12" width="1" height="3" fill="#cfcfcf"/><rect x="638" y="12" width="1" height="3" fill="#cfcfcf"/><rect x="643" y="12" width="1" height="3" fill="#cfcfcf"/><rect x="648" y="12" width="1" height="3" fill="#cfcfcf"/><rect x="653" y="12" width="1" height="3" fill="#cfcfcf"/><rect x="658" y="12" width="1" height="3" fill="#cfcfcf"/><rect x="663" y="0" width="1" height="15" fill="#cfcfcf"/><rect x="668" y="12" width="1" height="3" fill="#cfcfcf"/><rect x="673" y="12" width="1" height="3" fill="#cfcfcf"/><rect x="678" y="12" width="1" height="3" fill="#cfcfcf"/><rect x="683" y="12" width="1" height="3" fill="#cfcfcf"/><rect x="688" y="12" width="1" height="3" fill="#cfcfcf"/><rect x="693" y="12" width="1" height="3" fill="#cfcfcf"/><rect x="698" y="12" width="1" height="3" fill="#cfcfcf"/><rect x="703" y="12" width="1" height="3" fill="#cfcfcf"/><rect x="708" y="12" width="1" height="3" fill="#cfcfcf"/><rect x="713" y="0" width="1" height="15" fill="#cfcfcf"/><rect x="718" y="12" width="1" height="3" fill="#cfcfcf"/><rect x="723" y="12" width="1" height="3" fill="#cfcfcf"/><rect x="728" y="12" width="1" height="3" fill="#cfcfcf"/><rect x="733" y="12" width="1" height="3" fill="#cfcfcf"/><rect x="738" y="12" width="1" height="3" fill="#cfcfcf"/><rect x="743" y="12" width="1" height="3" fill="#cfcfcf"/><rect x="748" y="12" width="1" height="3" fill="#cfcfcf"/><rect x="753" y="12" width="1" height="3" fill="#cfcfcf"/><rect x="758" y="12" width="1" height="3" fill="#cfcfcf"/><rect x="763" y="0" width="1" height="15" fill="#cfcfcf"/><rect x="768" y="12" width="1" height="3" fill="#cfcfcf"/><rect x="773" y="12" width="1" height="3" fill="#cfcfcf"/><rect x="778" y="12" width="1" height="3" fill="#cfcfcf"/><rect x="783" y="12" width="1" height="3" fill="#cfcfcf"/><rect x="788" y="12" width="1" height="3" fill="#cfcfcf"/><rect x="793" y="12" width="1" height="3" fill="#cfcfcf"/><rect x="798" y="12" width="1" height="3" fill="#cfcfcf"/><rect x="803" y="12" width="1" height="3" fill="#cfcfcf"/><rect x="808" y="12" width="1" height="3" fill="#cfcfcf"/><rect x="813" y="0" width="1" height="15" fill="#cfcfcf"/><rect x="818" y="12" width="1" height="3" fill="#cfcfcf"/><rect x="823" y="12" width="1" height="3" fill="#cfcfcf"/><rect x="828" y="12" width="1" height="3" fill="#cfcfcf"/><rect x="833" y="12" width="1" height="3" fill="#cfcfcf"/><rect x="838" y="12" width="1" height="3" fill="#cfcfcf"/><rect x="843" y="12" width="1" height="3" fill="#cfcfcf"/><rect x="848" y="12" width="1" height="3" fill="#cfcfcf"/><rect x="853" y="12" width="1" height="3" fill="#cfcfcf"/><rect x="858" y="12" width="1" height="3" fill="#cfcfcf"/><rect x="863" y="0" width="1" height="15" fill="#cfcfcf"/><rect x="868" y="12" width="1" height="3" fill="#cfcfcf"/><rect x="873" y="12" width="1" height="3" fill="#cfcfcf"/><rect x="878" y="12" width="1" height="3" fill="#cfcfcf"/><rect x="883" y="12" width="1" height="3" fill="#cfcfcf"/><rect x="888" y="12" width="1" height="3" fill="#cfcfcf"/><rect x="893" y="12" width="1" height="3" fill="#cfcfcf"/><rect x="898" y="12" width="1" height="3" fill="#cfcfcf"/><rect x="903" y="12" width="1" height="3" fill="#cfcfcf"/><rect x="908" y="12" width="1" height="3" fill="#cfcfcf"/><rect x="913" y="0" width="1" height="15" fill="#cfcfcf"/><rect x="918" y="12" width="1" height="3" fill="#cfcfcf"/><rect x="923" y="12" width="1" height="3" fill="#cfcfcf"/><rect x="928" y="12" width="1" height="3" fill="#cfcfcf"/><rect x="933" y="12" width="1" height="3" fill="#cfcfcf"/><rect x="938" y="12" width="1" height="3" fill="#cfcfcf"/><rect x="943" y="12" width="1" height="3" fill="#cfcfcf"/><rect x="948" y="12" width="1" height="3" fill="#cfcfcf"/><rect x="953" y="12" width="1" height="3" fill="#cfcfcf"/><rect x="958" y="12" width="1" height="3" fill="#cfcfcf"/><rect x="963" y="0" width="1" height="15" fill="#cfcfcf"/><rect x="968" y="12" width="1" height="3" fill="#cfcfcf"/><rect x="973" y="12" width="1" height="3" fill="#cfcfcf"/><rect x="978" y="12" width="1" height="3" fill="#cfcfcf"/><rect x="983" y="12" width="1" height="3" fill="#cfcfcf"/><rect x="988" y="12" width="1" height="3" fill="#cfcfcf"/><rect x="993" y="12" width="1" height="3" fill="#cfcfcf"/><rect x="998" y="12" width="1" height="3" fill="#cfcfcf"/><rect x="1003" y="12" width="1" height="3" fill="#cfcfcf"/><rect x="1008" y="12" width="1" height="3" fill="#cfcfcf"/><rect x="1013" y="0" width="1" height="15" fill="#cfcfcf"/><rect x="1018" y="12" width="1" height="3" fill="#cfcfcf"/><rect x="1023" y="12" width="1" height="3" fill="#cfcfcf"/><rect x="1028" y="12" width="1" height="3" fill="#cfcfcf"/><rect x="1033" y="12" width="1" height="3" fill="#cfcfcf"/><rect x="1038" y="12" width="1" height="3" fill="#cfcfcf"/><rect x="1043" y="12" width="1" height="3" fill="#cfcfcf"/><rect x="1048" y="12" width="1" height="3" fill="#cfcfcf"/><rect x="1053" y="12" width="1" height="3" fill="#cfcfcf"/><rect x="1058" y="12" width="1" height="3" fill="#cfcfcf"/><rect x="1063" y="0" width="1" height="15" fill="#cfcfcf"/><rect x="1068" y="12" width="1" height="3" fill="#cfcfcf"/><rect x="1073" y="12" width="1" height="3" fill="#cfcfcf"/><rect x="1078" y="12" width="1" height="3" fill="#cfcfcf"/><rect x="1083" y="12" width="1" height="3" fill="#cfcfcf"/><rect x="1088" y="12" width="1" height="3" fill="#cfcfcf"/><rect x="1093" y="12" width="1" height="3" fill="#cfcfcf"/><rect x="1098" y="12" width="1" height="3" fill="#cfcfcf"/><rect x="1103" y="12" width="1" height="3" fill="#cfcfcf"/><rect x="1108" y="12" width="1" height="3" fill="#cfcfcf"/><rect x="1113" y="0" width="1" height="15" fill="#cfcfcf"/><rect x="1118" y="12" width="1" height="3" fill="#cfcfcf"/><rect x="1123" y="12" width="1" height="3" fill="#cfcfcf"/><rect x="1128" y="12" width="1" height="3" fill="#cfcfcf"/><rect x="1133" y="12" width="1" height="3" fill="#cfcfcf"/><rect x="1138" y="12" width="1" height="3" fill="#cfcfcf"/><rect x="1143" y="12" width="1" height="3" fill="#cfcfcf"/><rect x="1148" y="12" width="1" height="3" fill="#cfcfcf"/><rect x="1153" y="12" width="1" height="3" fill="#cfcfcf"/><rect x="1158" y="12" width="1" height="3" fill="#cfcfcf"/><rect x="1163" y="0" width="1" height="15" fill="#cfcfcf"/><rect x="1168" y="12" width="1" height="3" fill="#cfcfcf"/><rect x="1173" y="12" width="1" height="3" fill="#cfcfcf"/><rect x="1178" y="12" width="1" height="3" fill="#cfcfcf"/><rect x="1183" y="12" width="1" height="3" fill="#cfcfcf"/><rect x="1188" y="12" width="1" height="3" fill="#cfcfcf"/><rect x="1193" y="12" width="1" height="3" fill="#cfcfcf"/><rect x="1198" y="12" width="1" height="3" fill="#cfcfcf"/><rect x="1203" y="12" width="1" height="3" fill="#cfcfcf"/><rect x="1208" y="12" width="1" height="3" fill="#cfcfcf"/><rect x="1213" y="0" width="1" height="15" fill="#cfcfcf"/><rect x="1218" y="12" width="1" height="3" fill="#cfcfcf"/><rect x="1223" y="12" width="1" height="3" fill="#cfcfcf"/><rect x="1228" y="12" width="1" height="3" fill="#cfcfcf"/><rect x="1233" y="12" width="1" height="3" fill="#cfcfcf"/><rect x="1238" y="12" width="1" height="3" fill="#cfcfcf"/><rect x="1243" y="12" width="1" height="3" fill="#cfcfcf"/><rect x="1248" y="12" width="1" height="3" fill="#cfcfcf"/><rect x="1253" y="12" width="1" height="3" fill="#cfcfcf"/><rect x="1258" y="12" width="1" height="3" fill="#cfcfcf"/><rect x="1263" y="0" width="1" height="15" fill="#cfcfcf"/><rect x="1268" y="12" width="1" height="3" fill="#cfcfcf"/><rect x="1273" y="12" width="1" height="3" fill="#cfcfcf"/><rect x="1278" y="12" width="1" height="3" fill="#cfcfcf"/><rect x="1283" y="12" width="1" height="3" fill="#cfcfcf"/><rect x="1288" y="12" width="1" height="3" fill="#cfcfcf"/><rect x="1293" y="12" width="1" height="3" fill="#cfcfcf"/><rect x="1298" y="12" width="1" height="3" fill="#cfcfcf"/><rect x="1303" y="12" width="1" height="3" fill="#cfcfcf"/><rect x="1308" y="12" width="1" height="3" fill="#cfcfcf"/><rect x="1313" y="0" width="1" height="15" fill="#cfcfcf"/><rect x="1318" y="12" width="1" height="3" fill="#cfcfcf"/><rect x="1323" y="12" width="1" height="3" fill="#cfcfcf"/><rect x="1328" y="12" width="1" height="3" fill="#cfcfcf"/><text x="65" y="6.8" font-size="8" fill="#ffffff" font-family="Liberation Sans" letter-spacing="-0.2">200</text><text x="115" y="6.8" font-size="8" fill="#ffffff" font-family="Liberation Sans" letter-spacing="-0.2">150</text><text x="165" y="6.8" font-size="8" fill="#ffffff" font-family="Liberation Sans" letter-spacing="-0.2">100</text><text x="215" y="6.8" font-size="8" fill="#ffffff" font-family="Liberation Sans" letter-spacing="-0.2">50</text><text x="265" y="6.8" font-size="8" fill="#ffffff" font-family="Liberation Sans" letter-spacing="-0.2">0</text><text x="315" y="6.8" font-size="8" fill="#ffffff" font-family="Liberation Sans" letter-spacing="-0.2">50</text><text x="365" y="6.8" font-size="8" fill="#ffffff" font-family="Liberation Sans" letter-spacing="-0.2">100</text><text x="415" y="6.8" font-size="8" fill="#ffffff" font-family="Liberation Sans" letter-spacing="-0.2">150</text><text x="465" y="6.8" font-size="8" fill="#ffffff" font-family="Liberation Sans" letter-spacing="-0.2">200</text><text x="515" y="6.8" font-size="8" fill="#ffffff" font-family="Liberation Sans" letter-spacing="-0.2">250</text><text x="565" y="6.8" font-size="8" fill="#ffffff" font-family="Liberation Sans" letter-spacing="-0.2">300</text><text x="615" y="6.8" font-size="8" fill="#ffffff" font-family="Liberation Sans" letter-spacing="-0.2">350</text><text x="665" y="6.8" font-size="8" fill="#ffffff" font-family="Liberation Sans" letter-spacing="-0.2">400</text><text x="715" y="6.8" font-size="8" fill="#ffffff" font-family="Liberation Sans" letter-spacing="-0.2">450</text><text x="765" y="6.8" font-size="8" fill="#ffffff" font-family="Liberation Sans" letter-spacing="-0.2">500</text><text x="815" y="6.8" font-size="8" fill="#ffffff" font-family="Liberation Sans" letter-spacing="-0.2">550</text><text x="865" y="6.8" font-size="8" fill="#ffffff" font-family="Liberation Sans" letter-spacing="-0.2">600</text><text x="915" y="6.8" font-size="8" fill="#ffffff" font-family="Liberation Sans" letter-spacing="-0.2">650</text><text x="965" y="6.8" font-size="8" fill="#ffffff" font-family="Liberation Sans" letter-spacing="-0.2">700</text><text x="1015" y="6.8" font-size="8" fill="#ffffff" font-family="Liberation Sans" letter-spacing="-0.2">750</text><text x="1065" y="6.8" font-size="8" fill="#ffffff" font-family="Liberation Sans" letter-spacing="-0.2">800</text><text x="1115" y="6.8" font-size="8" fill="#ffffff" font-family="Liberation Sans" letter-spacing="-0.2">850</text><text x="1165" y="6.8" font-size="8" fill="#ffffff" font-family="Liberation Sans" letter-spacing="-0.2">900</text><text x="1215" y="6.8" font-size="8" fill="#ffffff" font-family="Liberation Sans" letter-spacing="-0.2">950</text><text x="1265" y="6.8" font-size="8" fill="#ffffff" font-family="Liberation Sans" letter-spacing="-0.2">1000</text><text x="1315" y="6.8" font-size="8" fill="#ffffff" font-family="Liberation Sans" letter-spacing="-0.2">1050</text></svg><svg class="a" style="left:366px;top:139px;" width="15" height="523" viewBox="0 0 15 523"><rect x="11" y="1" width="3" height="1" fill="#cfcfcf"/><rect x="11" y="6" width="3" height="1" fill="#cfcfcf"/><rect x="11" y="11" width="3" height="1" fill="#cfcfcf"/><rect x="11" y="16" width="3" height="1" fill="#cfcfcf"/><rect x="11" y="21" width="3" height="1" fill="#cfcfcf"/><rect x="11" y="26" width="3" height="1" fill="#cfcfcf"/><rect x="11" y="31" width="3" height="1" fill="#cfcfcf"/><rect x="0" y="36" width="15" height="1" fill="#cfcfcf"/><text transform="translate(1.5,38) rotate(90)" font-size="9" fill="#fff" font-family="Liberation Sans">100</text><rect x="11" y="41" width="3" height="1" fill="#cfcfcf"/><rect x="11" y="46" width="3" height="1" fill="#cfcfcf"/><rect x="11" y="51" width="3" height="1" fill="#cfcfcf"/><rect x="11" y="56" width="3" height="1" fill="#cfcfcf"/><rect x="11" y="61" width="3" height="1" fill="#cfcfcf"/><rect x="11" y="66" width="3" height="1" fill="#cfcfcf"/><rect x="11" y="71" width="3" height="1" fill="#cfcfcf"/><rect x="11" y="76" width="3" height="1" fill="#cfcfcf"/><rect x="11" y="81" width="3" height="1" fill="#cfcfcf"/><rect x="0" y="86" width="15" height="1" fill="#cfcfcf"/><text transform="translate(1.5,88) rotate(90)" font-size="9" fill="#fff" font-family="Liberation Sans">150</text><rect x="11" y="91" width="3" height="1" fill="#cfcfcf"/><rect x="11" y="96" width="3" height="1" fill="#cfcfcf"/><rect x="11" y="101" width="3" height="1" fill="#cfcfcf"/><rect x="11" y="106" width="3" height="1" fill="#cfcfcf"/><rect x="11" y="111" width="3" height="1" fill="#cfcfcf"/><rect x="11" y="116" width="3" height="1" fill="#cfcfcf"/><rect x="11" y="121" width="3" height="1" fill="#cfcfcf"/><rect x="11" y="126" width="3" height="1" fill="#cfcfcf"/><rect x="11" y="131" width="3" height="1" fill="#cfcfcf"/><rect x="0" y="136" width="15" height="1" fill="#cfcfcf"/><text transform="translate(1.5,138) rotate(90)" font-size="9" fill="#fff" font-family="Liberation Sans">200</text><rect x="11" y="141" width="3" height="1" fill="#cfcfcf"/><rect x="11" y="146" width="3" height="1" fill="#cfcfcf"/><rect x="11" y="151" width="3" height="1" fill="#cfcfcf"/><rect x="11" y="156" width="3" height="1" fill="#cfcfcf"/><rect x="11" y="161" width="3" height="1" fill="#cfcfcf"/><rect x="11" y="166" width="3" height="1" fill="#cfcfcf"/><rect x="11" y="171" width="3" height="1" fill="#cfcfcf"/><rect x="11" y="176" width="3" height="1" fill="#cfcfcf"/><rect x="11" y="181" width="3" height="1" fill="#cfcfcf"/><rect x="0" y="186" width="15" height="1" fill="#cfcfcf"/><text transform="translate(1.5,188) rotate(90)" font-size="9" fill="#fff" font-family="Liberation Sans">250</text><rect x="11" y="191" width="3" height="1" fill="#cfcfcf"/><rect x="11" y="196" width="3" height="1" fill="#cfcfcf"/><rect x="11" y="201" width="3" height="1" fill="#cfcfcf"/><rect x="11" y="206" width="3" height="1" fill="#cfcfcf"/><rect x="11" y="211" width="3" height="1" fill="#cfcfcf"/><rect x="11" y="216" width="3" height="1" fill="#cfcfcf"/><rect x="11" y="221" width="3" height="1" fill="#cfcfcf"/><rect x="11" y="226" width="3" height="1" fill="#cfcfcf"/><rect x="11" y="231" width="3" height="1" fill="#cfcfcf"/><rect x="0" y="236" width="15" height="1" fill="#cfcfcf"/><text transform="translate(1.5,238) rotate(90)" font-size="9" fill="#fff" font-family="Liberation Sans">300</text><rect x="11" y="241" width="3" height="1" fill="#cfcfcf"/><rect x="11" y="246" width="3" height="1" fill="#cfcfcf"/><rect x="11" y="251" width="3" height="1" fill="#cfcfcf"/><rect x="11" y="256" width="3" height="1" fill="#cfcfcf"/><rect x="11" y="261" width="3" height="1" fill="#cfcfcf"/><rect x="11" y="266" width="3" height="1" fill="#cfcfcf"/><rect x="11" y="271" width="3" height="1" fill="#cfcfcf"/><rect x="11" y="276" width="3" height="1" fill="#cfcfcf"/><rect x="11" y="281" width="3" height="1" fill="#cfcfcf"/><rect x="0" y="286" width="15" height="1" fill="#cfcfcf"/><text transform="translate(1.5,288) rotate(90)" font-size="9" fill="#fff" font-family="Liberation Sans">350</text><rect x="11" y="291" width="3" height="1" fill="#cfcfcf"/><rect x="11" y="296" width="3" height="1" fill="#cfcfcf"/><rect x="11" y="301" width="3" height="1" fill="#cfcfcf"/><rect x="11" y="306" width="3" height="1" fill="#cfcfcf"/><rect x="11" y="311" width="3" height="1" fill="#cfcfcf"/><rect x="11" y="316" width="3" height="1" fill="#cfcfcf"/><rect x="11" y="321" width="3" height="1" fill="#cfcfcf"/><rect x="11" y="326" width="3" height="1" fill="#cfcfcf"/><rect x="11" y="331" width="3" height="1" fill="#cfcfcf"/><rect x="0" y="336" width="15" height="1" fill="#cfcfcf"/><text transform="translate(1.5,338) rotate(90)" font-size="9" fill="#fff" font-family="Liberation Sans">400</text><rect x="11" y="341" width="3" height="1" fill="#cfcfcf"/><rect x="11" y="346" width="3" height="1" fill="#cfcfcf"/><rect x="11" y="351" width="3" height="1" fill="#cfcfcf"/><rect x="11" y="356" width="3" height="1" fill="#cfcfcf"/><rect x="11" y="361" width="3" height="1" fill="#cfcfcf"/><rect x="11" y="366" width="3" height="1" fill="#cfcfcf"/><rect x="11" y="371" width="3" height="1" fill="#cfcfcf"/><rect x="11" y="376" width="3" height="1" fill="#cfcfcf"/><rect x="11" y="381" width="3" height="1" fill="#cfcfcf"/><rect x="0" y="386" width="15" height="1" fill="#cfcfcf"/><text transform="translate(1.5,388) rotate(90)" font-size="9" fill="#fff" font-family="Liberation Sans">450</text><rect x="11" y="391" width="3" height="1" fill="#cfcfcf"/><rect x="11" y="396" width="3" height="1" fill="#cfcfcf"/><rect x="11" y="401" width="3" height="1" fill="#cfcfcf"/><rect x="11" y="406" width="3" height="1" fill="#cfcfcf"/><rect x="11" y="411" width="3" height="1" fill="#cfcfcf"/><rect x="11" y="416" width="3" height="1" fill="#cfcfcf"/><rect x="11" y="421" width="3" height="1" fill="#cfcfcf"/><rect x="11" y="426" width="3" height="1" fill="#cfcfcf"/><rect x="11" y="431" width="3" height="1" fill="#cfcfcf"/><rect x="0" y="436" width="15" height="1" fill="#cfcfcf"/><text transform="translate(1.5,438) rotate(90)" font-size="9" fill="#fff" font-family="Liberation Sans">500</text><rect x="11" y="441" width="3" height="1" fill="#cfcfcf"/><rect x="11" y="446" width="3" height="1" fill="#cfcfcf"/><rect x="11" y="451" width="3" height="1" fill="#cfcfcf"/><rect x="11" y="456" width="3" height="1" fill="#cfcfcf"/><rect x="11" y="461" width="3" height="1" fill="#cfcfcf"/><rect x="11" y="466" width="3" height="1" fill="#cfcfcf"/><rect x="11" y="471" width="3" height="1" fill="#cfcfcf"/><rect x="11" y="476" width="3" height="1" fill="#cfcfcf"/><rect x="11" y="481" width="3" height="1" fill="#cfcfcf"/><rect x="0" y="486" width="15" height="1" fill="#cfcfcf"/><text transform="translate(1.5,488) rotate(90)" font-size="9" fill="#fff" font-family="Liberation Sans">550</text><rect x="11" y="491" width="3" height="1" fill="#cfcfcf"/><rect x="11" y="496" width="3" height="1" fill="#cfcfcf"/><rect x="11" y="501" width="3" height="1" fill="#cfcfcf"/><rect x="11" y="506" width="3" height="1" fill="#cfcfcf"/><rect x="11" y="511" width="3" height="1" fill="#cfcfcf"/><rect x="11" y="516" width="3" height="1" fill="#cfcfcf"/><rect x="11" y="521" width="3" height="1" fill="#cfcfcf"/></svg><svg class="a" style="left:366px;top:123px;" width="15" height="16" viewBox="0 0 15 16"><path d="M0 7.5H15M7.5 0V15" stroke="#bdbdbd" stroke-width="1"/></svg><div class="a" style="left:628px;top:139px;width:6px;height:524px;background:#000;"></div><div class="a" style="left:1435px;top:139px;width:5px;height:524px;background:#000;"></div><div class="a" style="left:634px;top:139px;width:801px;height:524px;background:#fff;"></div><div id="t80" class="t" style="left:1551px;top:151.11px;font-size:10.5px;color:#e6e6e6;">Display Acceleration Disabled</div><div id="t81" class="t" style="left:780.5px;top:145.91px;font-size:19.6px;color:#2b3152;">CARE ESTE VALOAREA MEDIE A TRANZACȚIILOR?</div><div class="a" style="left:949.5px;top:183px;width:169px;height:29px;background:#e2e2e2;border-radius:4px"></div><div class="a" style="left:998.5px;top:184.5px;width:119.5px;height:25.5px;background:#2b7db3;border-radius:3px"></div><div id="t82" class="t" style="left:966px;top:190.30px;font-size:15px;color:#666;font-weight:bold;">Zi</div><div id="t83" class="t" style="left:1014px;top:190.30px;font-size:15px;color:#ffffff;font-weight:bold;">Săptămână</div><div id="t84" class="t" style="left:682px;top:237.57px;font-size:13.5px;color:#555;font-weight:bold;">Perioada:</div><div class="a" style="left:757.5px;top:228.7px;width:150px;height:32.3px;background:#fff;border:1px solid #c4c4c4;border-radius:3px"></div><div id="t85" class="t" style="left:767px;top:238.65px;font-size:14px;color:#6a6a6a;">Ultimele 6 luni</div><svg class="a" style="left:893px;top:241px;" width="7" height="5" viewBox="0 0 7 5"><path d="M0 0H7L3.5 5Z" fill="#777"/></svg><div class="a" style="left:911.5px;top:228.7px;width:81.5px;height:32.3px;background:#2b7db3;border-radius:3px"></div><div id="t86" class="t" style="left:932px;top:238.57px;font-size:13.5px;color:#fff;font-weight:bold;">Aplică</div><div class="a" style="left:1114.8px;top:228.9px;width:286.8px;height:28.8px;background:#fff;border:1.5px solid #82aecb;border-radius:3px"></div><svg class="a" style="left:1119px;top:234px;" width="20" height="20" viewBox="0 0 20 20"><circle cx="9.5" cy="9" r="8.5" fill="#2b7db3"/><path d="M5.5 9.2L8.3 11.8L13 6.5" fill="none" stroke="#fff" stroke-width="1.5"/></svg><div id="t87" class="t" style="left:1143.6px;top:236.65px;font-size:14px;color:#666;">Unitățile tale</div><svg class="a" style="left:1237px;top:234px;" width="20" height="20" viewBox="0 0 20 20"><circle cx="9.5" cy="9" r="8" fill="none" stroke="#2b7db3" stroke-width="1.5"/></svg><div id="t88" class="t" style="left:1262px;top:236.65px;font-size:14px;color:#666;">Unitățile concurente</div><svg class="a" style="left:0px;top:0px;" width="1920" height="1040" viewBox="0 0 1920 1040"><line x1="771.0" y1="277" x2="771.0" y2="634" stroke="#e0e0e0" stroke-width="1" stroke-dasharray="3 3"/><line x1="811.5" y1="277" x2="811.5" y2="634" stroke="#e0e0e0" stroke-width="1" stroke-dasharray="3 3"/><line x1="852.1" y1="277" x2="852.1" y2="634" stroke="#e0e0e0" stroke-width="1" stroke-dasharray="3 3"/><line x1="892.6" y1="277" x2="892.6" y2="634" stroke="#e0e0e0" stroke-width="1" stroke-dasharray="3 3"/><line x1="933.2" y1="277" x2="933.2" y2="634" stroke="#e0e0e0" stroke-width="1" stroke-dasharray="3 3"/><line x1="973.8" y1="277" x2="973.8" y2="634" stroke="#e0e0e0" stroke-width="1" stroke-dasharray="3 3"/><line x1="1014.3" y1="277" x2="1014.3" y2="634" stroke="#e0e0e0" stroke-width="1" stroke-dasharray="3 3"/><line x1="1054.8" y1="277" x2="1054.8" y2="634" stroke="#e0e0e0" stroke-width="1" stroke-dasharray="3 3"/><line x1="1095.4" y1="277" x2="1095.4" y2="634" stroke="#e0e0e0" stroke-width="1" stroke-dasharray="3 3"/><line x1="1136.0" y1="277" x2="1136.0" y2="634" stroke="#e0e0e0" stroke-width="1" stroke-dasharray="3 3"/><line x1="1176.5" y1="277" x2="1176.5" y2="634" stroke="#e0e0e0" stroke-width="1" stroke-dasharray="3 3"/><line x1="1217.0" y1="277" x2="1217.0" y2="634" stroke="#e0e0e0" stroke-width="1" stroke-dasharray="3 3"/><line x1="1257.6" y1="277" x2="1257.6" y2="634" stroke="#e0e0e0" stroke-width="1" stroke-dasharray="3 3"/><line x1="1298.2" y1="277" x2="1298.2" y2="634" stroke="#e0e0e0" stroke-width="1" stroke-dasharray="3 3"/><line x1="1338.7" y1="277" x2="1338.7" y2="634" stroke="#e0e0e0" stroke-width="1" stroke-dasharray="3 3"/><line x1="1379.2" y1="277" x2="1379.2" y2="634" stroke="#e0e0e0" stroke-width="1" stroke-dasharray="3 3"/><line x1="741" y1="277" x2="1388" y2="277" stroke="#e0e0e0" stroke-width="1" stroke-dasharray="3 3"/><line x1="741" y1="455.5" x2="1388" y2="455.5" stroke="#e0e0e0" stroke-width="1" stroke-dasharray="3 3"/><path d="M740.5 277V634.5H1388" fill="none" stroke="#7a7a7a" stroke-width="1.6"/><line x1="734" y1="277" x2="740" y2="277" stroke="#7a7a7a" stroke-width="1.6"/><line x1="734" y1="455.5" x2="740" y2="455.5" stroke="#7a7a7a" stroke-width="1.6"/><line x1="734" y1="634.5" x2="740" y2="634.5" stroke="#7a7a7a" stroke-width="1.6"/><line x1="771.0" y1="634" x2="771.0" y2="640" stroke="#7a7a7a" stroke-width="1.6"/><line x1="811.5" y1="634" x2="811.5" y2="640" stroke="#7a7a7a" stroke-width="1.6"/><line x1="852.1" y1="634" x2="852.1" y2="640" stroke="#7a7a7a" stroke-width="1.6"/><line x1="892.6" y1="634" x2="892.6" y2="640" stroke="#7a7a7a" stroke-width="1.6"/><line x1="933.2" y1="634" x2="933.2" y2="640" stroke="#7a7a7a" stroke-width="1.6"/><line x1="973.8" y1="634" x2="973.8" y2="640" stroke="#7a7a7a" stroke-width="1.6"/><line x1="1014.3" y1="634" x2="1014.3" y2="640" stroke="#7a7a7a" stroke-width="1.6"/><line x1="1054.8" y1="634" x2="1054.8" y2="640" stroke="#7a7a7a" stroke-width="1.6"/><line x1="1095.4" y1="634" x2="1095.4" y2="640" stroke="#7a7a7a" stroke-width="1.6"/><line x1="1136.0" y1="634" x2="1136.0" y2="640" stroke="#7a7a7a" stroke-width="1.6"/><line x1="1176.5" y1="634" x2="1176.5" y2="640" stroke="#7a7a7a" stroke-width="1.6"/><line x1="1217.0" y1="634" x2="1217.0" y2="640" stroke="#7a7a7a" stroke-width="1.6"/><line x1="1257.6" y1="634" x2="1257.6" y2="640" stroke="#7a7a7a" stroke-width="1.6"/><line x1="1298.2" y1="634" x2="1298.2" y2="640" stroke="#7a7a7a" stroke-width="1.6"/><line x1="1338.7" y1="634" x2="1338.7" y2="640" stroke="#7a7a7a" stroke-width="1.6"/><line x1="1379.2" y1="634" x2="1379.2" y2="640" stroke="#7a7a7a" stroke-width="1.6"/><text transform="translate(750.0,646) rotate(-52)" text-anchor="end" font-size="12" font-weight="bold" fill="#707070" font-family="Liberation Sans">1 Aug</text><text transform="translate(790.5,646) rotate(-52)" text-anchor="end" font-size="12" font-weight="bold" fill="#707070" font-family="Liberation Sans">8 Aug</text><text transform="translate(831.1,646) rotate(-52)" text-anchor="end" font-size="12" font-weight="bold" fill="#707070" font-family="Liberation Sans">15 Aug</text><text transform="translate(871.6,646) rotate(-52)" text-anchor="end" font-size="12" font-weight="bold" fill="#707070" font-family="Liberation Sans">5 Sep</text><text transform="translate(912.2,646) rotate(-52)" text-anchor="end" font-size="12" font-weight="bold" fill="#707070" font-family="Liberation Sans">12 Sep</text><text transform="translate(952.8,646) rotate(-52)" text-anchor="end" font-size="12" font-weight="bold" fill="#707070" font-family="Liberation Sans">19 Sep</text><text transform="translate(993.3,646) rotate(-52)" text-anchor="end" font-size="12" font-weight="bold" fill="#707070" font-family="Liberation Sans">3 Oct</text><text transform="translate(1033.8,646) rotate(-52)" text-anchor="end" font-size="12" font-weight="bold" fill="#707070" font-family="Liberation Sans">17 Oct</text><text transform="translate(1074.4,646) rotate(-52)" text-anchor="end" font-size="12" font-weight="bold" fill="#707070" font-family="Liberation Sans">7 Nov</text><text transform="translate(1115.0,646) rotate(-52)" text-anchor="end" font-size="12" font-weight="bold" fill="#707070" font-family="Liberation Sans">14 Nov</text><text transform="translate(1155.5,646) rotate(-52)" text-anchor="end" font-size="12" font-weight="bold" fill="#707070" font-family="Liberation Sans">21 Nov</text><text transform="translate(1196.0,646) rotate(-52)" text-anchor="end" font-size="12" font-weight="bold" fill="#707070" font-family="Liberation Sans">5 Dec</text><text transform="translate(1236.6,646) rotate(-52)" text-anchor="end" font-size="12" font-weight="bold" fill="#707070" font-family="Liberation Sans">12 Dec</text><text transform="translate(1277.2,646) rotate(-52)" text-anchor="end" font-size="12" font-weight="bold" fill="#707070" font-family="Liberation Sans">19 Dec</text><text transform="translate(1317.7,646) rotate(-52)" text-anchor="end" font-size="12" font-weight="bold" fill="#707070" font-family="Liberation Sans">2 Jan</text><text transform="translate(1358.2,646) rotate(-52)" text-anchor="end" font-size="12" font-weight="bold" fill="#707070" font-family="Liberation Sans">9 Jan</text><line x1="741" y1="471" x2="1378" y2="471" stroke="#fbbf80" stroke-width="1.6" stroke-dasharray="4 4"/><path d="M1376 466L1390 471L1376 476L1379 471Z" fill="#f7a040"/><circle cx="740" cy="471" r="4.3" fill="#f7a040"/><text x="1030" y="463" font-size="13" fill="#f9b46c" font-weight="bold" font-family="Liberation Sans">45.63 RON</text><path d="M750.1 398.8 C758.2 416.0 764.2 423.8 770.4 441.7 C780.4 471.0 784.2 486.4 790.6 516.8 C800.5 563.3 805.2 634.0 810.9 633.9 C821.4 608.0 817.0 484.0 831.2 416.8 C833.3 407.0 848.1 449.2 851.5 441.4 C864.3 412.0 866.6 306.2 871.7 323.6 C882.8 360.5 878.8 511.7 892.0 577.1 C895.0 591.8 904.4 545.2 912.3 523.8 C920.7 501.0 927.9 490.3 932.6 466.6 C944.1 407.4 945.0 314.3 952.8 316.4 C961.2 318.6 964.5 473.6 973.1 477.4 C980.8 480.8 987.8 316.6 993.4 334.4 C1004.0 367.9 1004.3 589.1 1013.7 605.5 C1020.6 617.6 1019.4 481.2 1033.9 405.7 C1035.6 397.1 1050.9 389.1 1054.2 395.3 C1067.1 418.9 1065.8 446.3 1074.5 480.1 C1082.0 509.1 1086.0 523.6 1094.8 552.2 C1102.2 576.8 1103.9 590.6 1115.0 613.1 C1120.1 623.3 1133.4 634.0 1135.3 633.9 C1149.6 564.3 1144.5 448.1 1155.6 416.1 C1160.8 401.1 1170.1 528.3 1175.9 516.5 C1186.3 495.4 1187.7 337.0 1196.1 334.0 C1203.9 331.2 1205.4 435.3 1216.4 502.0 C1221.7 534.0 1223.9 558.1 1236.7 580.6 C1240.1 586.6 1255.1 581.2 1257.0 573.3 C1271.3 512.8 1266.1 474.4 1277.2 409.5 C1282.3 380.2 1294.0 320.6 1297.5 337.8 C1310.2 400.4 1306.1 560.4 1317.8 609.0 C1322.3 627.7 1332.0 547.6 1338.1 506.1 C1348.2 436.3 1347.3 356.2 1358.3 330.9 C1363.6 318.8 1370.5 379.9 1378.6 412.6" fill="none" stroke="#f7a040" stroke-width="2.2"/><g fill="#fff" stroke="#f7a848" stroke-width="1.3"><circle cx="750.1" cy="398.8" r="4.3"/><circle cx="770.4" cy="441.7" r="4.3"/><circle cx="790.6" cy="516.8" r="4.3"/><circle cx="810.9" cy="633.9" r="4.3"/><circle cx="831.2" cy="416.8" r="4.3"/><circle cx="851.5" cy="441.4" r="4.3"/><circle cx="871.7" cy="323.6" r="4.3"/><circle cx="892.0" cy="577.1" r="4.3"/><circle cx="912.3" cy="523.8" r="4.3"/><circle cx="932.6" cy="466.6" r="4.3"/><circle cx="952.8" cy="316.4" r="4.3"/><circle cx="973.1" cy="477.4" r="4.3"/><circle cx="993.4" cy="334.4" r="4.3"/><circle cx="1013.7" cy="605.5" r="4.3"/><circle cx="1033.9" cy="405.7" r="4.3"/><circle cx="1074.5" cy="480.1" r="4.3"/><circle cx="1094.8" cy="552.2" r="4.3"/><circle cx="1115.0" cy="613.1" r="4.3"/><circle cx="1135.3" cy="633.9" r="4.3"/><circle cx="1155.6" cy="416.1" r="4.3"/><circle cx="1175.9" cy="516.5" r="4.3"/><circle cx="1196.1" cy="334.0" r="4.3"/><circle cx="1216.4" cy="502.0" r="4.3"/><circle cx="1236.7" cy="580.6" r="4.3"/><circle cx="1257.0" cy="573.3" r="4.3"/><circle cx="1277.2" cy="409.5" r="4.3"/><circle cx="1297.5" cy="337.8" r="4.3"/><circle cx="1317.8" cy="609.0" r="4.3"/><circle cx="1338.1" cy="506.1" r="4.3"/><circle cx="1358.3" cy="330.9" r="4.3"/><circle cx="1378.6" cy="412.6" r="4.3"/></g><circle cx="1054.4" cy="395.3" r="6.5" fill="#fff" stroke="#f8c890" stroke-width="1.4"/><rect x="1078" y="414.3" width="186.3" height="72.7" rx="4" fill="rgba(85,85,85,0.88)"/><circle cx="1087.5" cy="450.5" r="4.3" fill="#f7a040"/></svg><div id="t89" class="t" style="left:1129px;top:422.65px;font-size:14px;color:#fff;font-weight:bold;">Unitățile tale</div><div id="t90" class="t" style="left:1097px;top:443.65px;font-size:14px;color:#fff;font-weight:600">28 Oct - 31 Oct: 67 RON</div><div id="t91" class="t" style="left:1128px;top:464.65px;font-size:14px;color:#fff;">63 tranzacții</div><div id="t92" class="t" style="left:680px;top:271.50px;font-size:13px;color:#777;">100 RON</div><div id="t93" class="t" style="left:686px;top:449.50px;font-size:13px;color:#777;">50 RON</div><div id="t94" class="t" style="left:693px;top:628.00px;font-size:13px;color:#777;">0 RON</div><div class="a" style="left:381px;top:644px;width:1315px;height:18px;background:rgba(248,142,18,0.875);border-top:1px solid rgba(160,95,25,0.75);border-bottom:1px solid rgba(160,95,25,0.75)"></div><svg class="a" style="left:387px;top:646px;" width="14" height="13" viewBox="0 0 14 13"><path d="M7 0.8L13.4 12.3H0.6Z" fill="#f7d21a" stroke="#3a2a00" stroke-width="0.8"/><rect x="6.3" y="4" width="1.4" height="4.8" fill="#222"/><rect x="6.3" y="9.6" width="1.4" height="1.4" fill="#222"/></svg><div id="t95" class="t" style="left:406px;top:647.69px;font-size:11px;color:#2a1800;">This project contains an expression error: error 1 of 1</div><svg class="a" style="left:1593px;top:645px;" width="16" height="16" viewBox="0 0 16 16"><path d="M2.5 2.5L13 13M13 2.5L2.5 13" stroke="#111" stroke-width="2"/></svg><div class="a" style="left:1627px;top:645px;width:15px;height:16px;background:rgba(120,60,0,0.18);"></div><div class="a" style="left:1645px;top:645px;width:15px;height:16px;background:rgba(120,60,0,0.18);"></div><div class="a" style="left:1662px;top:645px;width:15px;height:16px;background:rgba(120,60,0,0.18);"></div><div class="a" style="left:1679px;top:645px;width:15px;height:16px;background:rgba(120,60,0,0.18);"></div><svg class="a" style="left:1628px;top:646px;" width="12" height="14" viewBox="0 0 12 14"><path d="M9 1.5V12.5L2.5 7Z" fill="#111"/></svg><svg class="a" style="left:1645px;top:646px;" width="14" height="14" viewBox="0 0 14 14"><circle cx="8.5" cy="5.5" r="4" fill="none" stroke="#111" stroke-width="1.5"/><line x1="5.5" y1="8.5" x2="1.5" y2="12.5" stroke="#111" stroke-width="1.8"/></svg><svg class="a" style="left:1663px;top:646px;" width="12" height="14" viewBox="0 0 12 14"><path d="M3 1.5V12.5L9.5 7Z" fill="#111"/></svg><svg class="a" style="left:1679px;top:646px;" width="14" height="14" viewBox="0 0 14 14"><path d="M1.5 10.5L7 4.5L12.5 10.5" fill="none" stroke="#111" stroke-width="2"/></svg><div class="a" style="left:365px;top:663px;width:1332px;height:24px;background:#232323;"></div><div class="a" style="left:365px;top:686px;width:1332px;height:1px;background:#161616;"></div><svg class="a" style="left:371px;top:667px;" width="15" height="15" viewBox="0 0 15 15"><rect x="0.5" y="0.5" width="10" height="8" fill="#c4c4c4"/><path d="M4 2.5L8 4.5L4 6.5Z" fill="#232323"/><path d="M12 3V11H3" fill="none" stroke="#c4c4c4" stroke-width="1.2"/><path d="M14 5V13H5" fill="none" stroke="#c4c4c4" stroke-width="1.2"/></svg><svg class="a" style="left:392px;top:667px;" width="13" height="14" viewBox="0 0 13 14"><rect x="0.6" y="0.6" width="11.5" height="8.5" fill="none" stroke="#c4c4c4" stroke-width="1.2"/><rect x="5.5" y="9.5" width="2" height="2" fill="#c4c4c4"/><rect x="2.5" y="11.5" width="8" height="1.2" fill="#c4c4c4"/></svg><svg class="a" style="left:413px;top:668px;" width="17" height="16" viewBox="0 0 17 16"><path d="M1 3C1 1 3 0.5 5 1H11C13 0.5 16 1 16 3V5C16 8 13 8 11 7L8.5 5.5L6 7C4 8 1 8 1 5Z" fill="#c4c4c4"/><circle cx="5" cy="4" r="1.8" fill="#232323"/><circle cx="12" cy="4" r="1.8" fill="#232323"/><path d="M6 11H11L8.5 14Z" fill="#c4c4c4"/></svg><div class="a" style="left:433px;top:666px;width:67px;height:20px;background:#1d1d1d;border-radius:2px"></div><div id="t96" class="t" style="left:439px;top:669.84px;font-size:12px;color:#c4c4c4;">100%</div><svg class="a" style="left:487px;top:674px;" width="8" height="5" viewBox="0 0 8 5"><path d="M0.5 0.5L4 4L7.5 0.5" fill="none" stroke="#b0b0b0" stroke-width="1.1"/></svg><svg class="a" style="left:504px;top:667px;" width="17" height="17" viewBox="0 0 17 17"><rect x="1" y="2.5" width="14" height="9" fill="none" stroke="#c4c4c4" stroke-width="1.2"/><path d="M8 4.5V9.5M5.5 7H10.5" stroke="#c4c4c4" stroke-width="1"/><path d="M0 5H2M14 5H17M8 0V2.5M8 11.5V13" stroke="#c4c4c4"/><path d="M6.5 14H11.5L9 16.5Z" fill="#c4c4c4"/></svg><div class="a" style="left:525px;top:666px;width:20px;height:20px;background:#1a1a1a;border-radius:2px"></div><svg class="a" style="left:528px;top:669px;" width="15" height="14" viewBox="0 0 15 14"><path d="M4 1.5H13L14 12.5H1.5Z" fill="none" stroke="#3d8ee8" stroke-width="1.5"/><rect x="2.5" y="0.5" width="2.5" height="2.5" fill="#3d8ee8"/><rect x="12" y="0.5" width="2.5" height="2.5" fill="#3d8ee8"/></svg><div class="a" style="left:547px;top:666px;width:68px;height:20px;background:#1d1d1d;border-radius:2px"></div><div id="t97" class="t" style="left:555px;top:669.84px;font-size:12px;color:#a0a0a0;">0:00:00:00</div><svg class="a" style="left:619px;top:669px;" width="16" height="13" viewBox="0 0 16 13"><rect x="0" y="2.5" width="15" height="10" rx="1" fill="#c4c4c4"/><rect x="4.5" y="0.5" width="6" height="3" fill="#c4c4c4"/><circle cx="7.5" cy="7.5" r="2.8" fill="#232323"/><circle cx="7.5" cy="7.5" r="1.5" fill="#c4c4c4"/></svg><svg class="a" style="left:641px;top:667px;" width="16" height="15" viewBox="0 0 16 15"><circle cx="6" cy="9" r="5" fill="none" stroke="#3d3d3d" stroke-width="1.5"/><circle cx="11" cy="5" r="3.5" fill="none" stroke="#3d3d3d" stroke-width="1.5"/></svg><svg class="a" style="left:664px;top:667px;" width="16" height="17" viewBox="0 0 16 17"><circle cx="7" cy="4" r="3.2" fill="#e53b3b"/><circle cx="4" cy="9" r="3.2" fill="#2fbf3f"/><circle cx="10" cy="9" r="3.2" fill="#3a7ff0"/><path d="M10 13H15L12.5 16Z" fill="#c4c4c4"/></svg><div class="a" style="left:683px;top:666px;width:85px;height:20px;background:#1d1d1d;border-radius:2px"></div><div id="t98" class="t" style="left:690px;top:669.84px;font-size:12px;color:#c4c4c4;">Full</div><svg class="a" style="left:757px;top:674px;" width="8" height="5" viewBox="0 0 8 5"><path d="M0.5 0.5L4 4L7.5 0.5" fill="none" stroke="#b0b0b0" stroke-width="1.1"/></svg><svg class="a" style="left:773px;top:668px;" width="14" height="14" viewBox="0 0 14 14"><rect x="0.6" y="0.6" width="12.8" height="12.8" fill="none" stroke="#c4c4c4" stroke-width="1.2"/><rect x="3" y="3.5" width="8" height="6" fill="#c4c4c4"/></svg><svg class="a" style="left:795px;top:668px;" width="14" height="14" viewBox="0 0 14 14"><rect x="0.5" y="0.5" width="13" height="13" fill="#3a3a3a" stroke="#c4c4c4"/><g fill="#c4c4c4"><rect x="1" y="1" width="3" height="3"/><rect x="7" y="1" width="3" height="3"/><rect x="4" y="4" width="3" height="3"/><rect x="10" y="4" width="3" height="3"/><rect x="1" y="7" width="3" height="3"/><rect x="7" y="7" width="3" height="3"/><rect x="4" y="10" width="3" height="3"/><rect x="10" y="10" width="3" height="3"/></g></svg><div class="a" style="left:814px;top:666px;width:104px;height:20px;background:#1d1d1d;border-radius:2px"></div><div id="t99" class="t" style="left:821px;top:669.84px;font-size:12px;color:#c4c4c4;">Active Camera</div><svg class="a" style="left:906px;top:674px;" width="8" height="5" viewBox="0 0 8 5"><path d="M0.5 0.5L4 4L7.5 0.5" fill="none" stroke="#b0b0b0" stroke-width="1.1"/></svg><div class="a" style="left:922px;top:666px;width:68px;height:20px;background:#1d1d1d;border-radius:2px"></div><div id="t100" class="t" style="left:929px;top:669.84px;font-size:12px;color:#c4c4c4;">1 View</div><svg class="a" style="left:978px;top:674px;" width="8" height="5" viewBox="0 0 8 5"><path d="M0.5 0.5L4 4L7.5 0.5" fill="none" stroke="#b0b0b0" stroke-width="1.1"/></svg><svg class="a" style="left:994px;top:667px;" width="17" height="16" viewBox="0 0 17 16"><path d="M1 3H15M12 0.5L15 3L12 5.5" fill="none" stroke="#c4c4c4" stroke-width="1.2"/><rect x="3.5" y="7.5" width="9" height="7" fill="none" stroke="#c4c4c4" stroke-width="1.2"/><path d="M8 3V7" stroke="#c4c4c4"/></svg><div class="a" style="left:1013px;top:666px;width:21px;height:20px;background:#1a1a1a;border-radius:2px"></div><svg class="a" style="left:1016px;top:668px;" width="16" height="15" viewBox="0 0 16 15"><rect x="0.6" y="0.6" width="14" height="11" fill="none" stroke="#c4c4c4" stroke-width="1.2"/><path d="M8 2L5 7H8L6.5 10.5L11 5H8L9 2Z" fill="#c4c4c4"/><path d="M11 11H16L13.5 14Z" fill="#c4c4c4"/></svg><svg class="a" style="left:1040px;top:667px;" width="14" height="14" viewBox="0 0 14 14"><path d="M0.6 6V13.4H13.4V6" fill="none" stroke="#c4c4c4" stroke-width="1.2"/><rect x="3" y="4" width="1.5" height="7" fill="#c4c4c4"/><rect x="6.3" y="1" width="1.5" height="10" fill="#c4c4c4"/><rect x="9.5" y="4" width="1.5" height="7" fill="#c4c4c4"/></svg><svg class="a" style="left:1060px;top:667px;" width="15" height="15" viewBox="0 0 15 15"><rect x="5" y="0" width="5" height="4" fill="#c4c4c4"/><rect x="7" y="4" width="1.2" height="3" fill="#c4c4c4"/><rect x="2" y="6.5" width="11" height="1.2" fill="#c4c4c4"/><rect x="2" y="6.5" width="1.2" height="3" fill="#c4c4c4"/><rect x="12" y="6.5" width="1.2" height="3" fill="#c4c4c4"/><rect x="0" y="9.5" width="5" height="4.5" fill="#c4c4c4"/><rect x="10" y="9.5" width="5" height="4.5" fill="#c4c4c4"/></svg><div class="a" style="left:1080px;top:666px;width:1px;height:19px;background:#2e2e2e;"></div><svg class="a" style="left:1085px;top:667px;" width="15" height="15" viewBox="0 0 15 15"><circle cx="7.5" cy="7.5" r="6.5" fill="none" stroke="#c4c4c4" stroke-width="1.8"/><path d="M7.5 1L5 7.5M14 7.5L7.5 5M7.5 14L10 7.5M1 7.5L7.5 10" stroke="#c4c4c4" stroke-width="1.4"/></svg><div id="t101" class="t" style="left:1106px;top:669.84px;font-size:12px;color:#3d8ee8;">+0.0</div><div class="a" style="left:1701px;top:70px;width:219px;height:131px;background:#232323;"></div><div class="a" style="left:1701px;top:202px;width:219px;height:107px;background:#232323;"></div><div class="a" style="left:1701px;top:310px;width:219px;height:377px;background:#232323;"></div><div id="t102" class="t" style="left:1714px;top:78.27px;font-size:11.5px;color:#c8c8c8;">Info</div><svg class="a" style="left:1887px;top:81px;" width="9" height="8" viewBox="0 0 9 8"><path d="M0 0.5H9M0 4H9M0 7.5H9" stroke="#c8c8c8" stroke-width="1"/></svg><div class="a" style="left:1709px;top:115px;width:20px;height:20px;background:#fff;border:1px solid #111"></div><div id="t103" class="t" style="left:1735px;top:103.27px;font-size:11.5px;color:#8a8a8a;">R</div><div id="t104" class="t" style="left:1745px;top:103.27px;font-size:11.5px;color:#8a8a8a;">:</div><div id="t105" class="t" style="left:1753px;top:103.27px;font-size:11.5px;color:#a0a0a0;">255</div><div id="t106" class="t" style="left:1735px;top:116.57px;font-size:11.5px;color:#8a8a8a;">G</div><div id="t107" class="t" style="left:1745px;top:116.57px;font-size:11.5px;color:#8a8a8a;">:</div><div id="t108" class="t" style="left:1753px;top:116.57px;font-size:11.5px;color:#a0a0a0;">255</div><div id="t109" class="t" style="left:1735px;top:129.87px;font-size:11.5px;color:#8a8a8a;">B</div><div id="t110" class="t" style="left:1745px;top:129.87px;font-size:11.5px;color:#8a8a8a;">:</div><div id="t111" class="t" style="left:1753px;top:129.87px;font-size:11.5px;color:#a0a0a0;">255</div><div id="t112" class="t" style="left:1735px;top:143.17px;font-size:11.5px;color:#8a8a8a;">A</div><div id="t113" class="t" style="left:1745px;top:143.17px;font-size:11.5px;color:#8a8a8a;">:</div><div id="t114" class="t" style="left:1753px;top:143.17px;font-size:11.5px;color:#a0a0a0;">255</div><div class="a" style="left:1803px;top:104px;width:1px;height:51px;background:#3a3a3a;"></div><svg class="a" style="left:1812px;top:127px;" width="10" height="10" viewBox="0 0 10 10"><path d="M5 0V10M0 5H10" stroke="#c8c8c8" stroke-width="1.1"/></svg><div id="t115" class="t" style="left:1826px;top:103.27px;font-size:11.5px;color:#8a8a8a;">X</div><div id="t116" class="t" style="left:1836px;top:103.27px;font-size:11.5px;color:#8a8a8a;">:</div><div id="t117" class="t" style="left:1842px;top:103.27px;font-size:11.5px;color:#a0a0a0;">175</div><div id="t118" class="t" style="left:1826px;top:116.77px;font-size:11.5px;color:#8a8a8a;">Y</div><div id="t119" class="t" style="left:1836px;top:116.77px;font-size:11.5px;color:#8a8a8a;">:</div><div id="t120" class="t" style="left:1844px;top:116.77px;font-size:11.5px;color:#a0a0a0;">485</div><div class="a" style="left:1707px;top:161px;width:191px;height:1px;background:#363636;"></div><div id="t121" class="t" style="left:1714px;top:211.27px;font-size:11.5px;color:#c8c8c8;">Preview</div><svg class="a" style="left:1887px;top:214px;" width="9" height="8" viewBox="0 0 9 8"><path d="M0 0.5H9M0 4H9M0 7.5H9" stroke="#c8c8c8" stroke-width="1"/></svg><svg class="a" style="left:1747px;top:239px;" width="14" height="11" viewBox="0 0 14 11"><rect x="0" y="0" width="2" height="11" fill="#a8a8a8"/><path d="M13 0V11L3 5.5Z" fill="#a8a8a8"/></svg><svg class="a" style="left:1771px;top:239px;" width="14" height="11" viewBox="0 0 14 11"><path d="M9 0V11L0 5.5Z" fill="#a8a8a8"/><rect x="11" y="0" width="2" height="11" fill="#a8a8a8"/></svg><svg class="a" style="left:1796px;top:239px;" width="11" height="11" viewBox="0 0 11 11"><path d="M0 0V11L10 5.5Z" fill="#a8a8a8"/></svg><svg class="a" style="left:1818px;top:239px;" width="14" height="11" viewBox="0 0 14 11"><rect x="0" y="0" width="2" height="11" fill="#a8a8a8"/><path d="M4 0V11L13 5.5Z" fill="#a8a8a8"/></svg><svg class="a" style="left:1843px;top:239px;" width="14" height="11" viewBox="0 0 14 11"><path d="M0 0V11L10 5.5Z" fill="#a8a8a8"/><rect x="11" y="0" width="2" height="11" fill="#a8a8a8"/></svg><div class="a" style="left:1707px;top:259px;width:195px;height:1px;background:#363636;"></div><div id="t122" class="t" style="left:1708px;top:267.27px;font-size:11.5px;color:#8a8a8a;">Shortcut</div><div class="a" style="left:1707px;top:283px;width:168px;height:19px;background:#1d1d1d;border:1px solid #2c2c2c;border-radius:2px"></div><div id="t123" class="t" style="left:1715px;top:287.27px;font-size:11.5px;color:#c8c8c8;">Spacebar</div><svg class="a" style="left:1862px;top:290px;" width="8" height="5" viewBox="0 0 8 5"><path d="M0.5 0.5L4 4L7.5 0.5" fill="none" stroke="#b0b0b0" stroke-width="1.1"/></svg><svg class="a" style="left:1884px;top:285px;" width="14" height="14" viewBox="0 0 14 14"><path d="M3 6A5 5 0 1 1 7.5 11.5" fill="none" stroke="#c8c8c8" stroke-width="1.4"/><path d="M0 4L5 3L4 8Z" fill="#c8c8c8"/><rect x="1" y="12.5" width="12" height="1.2" fill="#c8c8c8"/></svg><div id="t124" class="t" style="left:1714px;top:320.27px;font-size:11.5px;color:#c8c8c8;">Effects &amp; Presets</div><svg class="a" style="left:1887px;top:323px;" width="9" height="8" viewBox="0 0 9 8"><path d="M0 0.5H9M0 4H9M0 7.5H9" stroke="#c8c8c8" stroke-width="1"/></svg><div class="a" style="left:1707px;top:343px;width:194px;height:18px;background:#171717;border-radius:2px"></div><svg class="a" style="left:1714px;top:346px;" width="18" height="13" viewBox="0 0 18 13"><circle cx="8" cy="5" r="3.6" fill="none" stroke="#b8b8b8" stroke-width="1.2"/><line x1="5.3" y1="7.7" x2="1.5" y2="11.5" stroke="#b8b8b8" stroke-width="1.4"/><path d="M12 8H17L14.5 10.5Z" fill="#b8b8b8"/></svg><div class="a" style="left:1701px;top:362px;width:208px;height:1px;background:#111;"></div><div class="a" style="left:1703px;top:381px;width:204px;height:1px;background:#2a2a2a;"></div><svg class="a" style="left:1707px;top:369px;" width="5" height="8" viewBox="0 0 5 8"><path d="M0.5 0.5L4 4L0.5 7.5" fill="none" stroke="#a0a0a0" stroke-width="1.1"/></svg><div id="t125" class="t" style="left:1718px;top:367.57px;font-size:11.5px;color:#c0c0c0;">* Animation Presets</div><div class="a" style="left:1703px;top:398px;width:204px;height:1px;background:#2a2a2a;"></div><svg class="a" style="left:1707px;top:386px;" width="5" height="8" viewBox="0 0 5 8"><path d="M0.5 0.5L4 4L0.5 7.5" fill="none" stroke="#a0a0a0" stroke-width="1.1"/></svg><div id="t126" class="t" style="left:1718px;top:384.57px;font-size:11.5px;color:#c0c0c0;">3D Channel</div><div class="a" style="left:1703px;top:415px;width:204px;height:1px;background:#2a2a2a;"></div><svg class="a" style="left:1707px;top:403px;" width="5" height="8" viewBox="0 0 5 8"><path d="M0.5 0.5L4 4L0.5 7.5" fill="none" stroke="#a0a0a0" stroke-width="1.1"/></svg><div id="t127" class="t" style="left:1718px;top:401.57px;font-size:11.5px;color:#c0c0c0;">Audio</div><div class="a" style="left:1703px;top:432px;width:204px;height:1px;background:#2a2a2a;"></div><svg class="a" style="left:1707px;top:420px;" width="5" height="8" viewBox="0 0 5 8"><path d="M0.5 0.5L4 4L0.5 7.5" fill="none" stroke="#a0a0a0" stroke-width="1.1"/></svg><div id="t128" class="t" style="left:1718px;top:418.57px;font-size:11.5px;color:#c0c0c0;">Blur &amp; Sharpen</div><div class="a" style="left:1703px;top:449px;width:204px;height:1px;background:#2a2a2a;"></div><svg class="a" style="left:1707px;top:437px;" width="5" height="8" viewBox="0 0 5 8"><path d="M0.5 0.5L4 4L0.5 7.5" fill="none" stroke="#a0a0a0" stroke-width="1.1"/></svg><div id="t129" class="t" style="left:1718px;top:435.57px;font-size:11.5px;color:#c0c0c0;">Boris FX Mocha</div><div class="a" style="left:1703px;top:466px;width:204px;height:1px;background:#2a2a2a;"></div><svg class="a" style="left:1707px;top:454px;" width="5" height="8" viewBox="0 0 5 8"><path d="M0.5 0.5L4 4L0.5 7.5" fill="none" stroke="#a0a0a0" stroke-width="1.1"/></svg><div id="t130" class="t" style="left:1718px;top:452.57px;font-size:11.5px;color:#c0c0c0;">Channel</div><div class="a" style="left:1703px;top:483px;width:204px;height:1px;background:#2a2a2a;"></div><svg class="a" style="left:1707px;top:471px;" width="5" height="8" viewBox="0 0 5 8"><path d="M0.5 0.5L4 4L0.5 7.5" fill="none" stroke="#a0a0a0" stroke-width="1.1"/></svg><div id="t131" class="t" style="left:1718px;top:469.57px;font-size:11.5px;color:#c0c0c0;">CINEMA 4D</div><div class="a" style="left:1703px;top:500px;width:204px;height:1px;background:#2a2a2a;"></div><svg class="a" style="left:1707px;top:488px;" width="5" height="8" viewBox="0 0 5 8"><path d="M0.5 0.5L4 4L0.5 7.5" fill="none" stroke="#a0a0a0" stroke-width="1.1"/></svg><div id="t132" class="t" style="left:1718px;top:486.57px;font-size:11.5px;color:#c0c0c0;">Color Correction</div><div class="a" style="left:1703px;top:517px;width:204px;height:1px;background:#2a2a2a;"></div><svg class="a" style="left:1707px;top:505px;" width="5" height="8" viewBox="0 0 5 8"><path d="M0.5 0.5L4 4L0.5 7.5" fill="none" stroke="#a0a0a0" stroke-width="1.1"/></svg><div id="t133" class="t" style="left:1718px;top:503.57px;font-size:11.5px;color:#c0c0c0;">Distort</div><div class="a" style="left:1703px;top:534px;width:204px;height:1px;background:#2a2a2a;"></div><svg class="a" style="left:1707px;top:522px;" width="5" height="8" viewBox="0 0 5 8"><path d="M0.5 0.5L4 4L0.5 7.5" fill="none" stroke="#a0a0a0" stroke-width="1.1"/></svg><div id="t134" class="t" style="left:1718px;top:520.57px;font-size:11.5px;color:#c0c0c0;">Expression Controls</div><div class="a" style="left:1703px;top:551px;width:204px;height:1px;background:#2a2a2a;"></div><svg class="a" style="left:1707px;top:539px;" width="5" height="8" viewBox="0 0 5 8"><path d="M0.5 0.5L4 4L0.5 7.5" fill="none" stroke="#a0a0a0" stroke-width="1.1"/></svg><div id="t135" class="t" style="left:1718px;top:537.57px;font-size:11.5px;color:#c0c0c0;">Generate</div><div class="a" style="left:1703px;top:568px;width:204px;height:1px;background:#2a2a2a;"></div><svg class="a" style="left:1707px;top:556px;" width="5" height="8" viewBox="0 0 5 8"><path d="M0.5 0.5L4 4L0.5 7.5" fill="none" stroke="#a0a0a0" stroke-width="1.1"/></svg><div id="t136" class="t" style="left:1718px;top:554.57px;font-size:11.5px;color:#c0c0c0;">Immersive Video</div><div class="a" style="left:1703px;top:585px;width:204px;height:1px;background:#2a2a2a;"></div><svg class="a" style="left:1707px;top:573px;" width="5" height="8" viewBox="0 0 5 8"><path d="M0.5 0.5L4 4L0.5 7.5" fill="none" stroke="#a0a0a0" stroke-width="1.1"/></svg><div id="t137" class="t" style="left:1718px;top:571.57px;font-size:11.5px;color:#c0c0c0;">Keying</div><div class="a" style="left:1703px;top:602px;width:204px;height:1px;background:#2a2a2a;"></div><svg class="a" style="left:1707px;top:590px;" width="5" height="8" viewBox="0 0 5 8"><path d="M0.5 0.5L4 4L0.5 7.5" fill="none" stroke="#a0a0a0" stroke-width="1.1"/></svg><div id="t138" class="t" style="left:1718px;top:588.57px;font-size:11.5px;color:#c0c0c0;">Matte</div><div class="a" style="left:1703px;top:619px;width:204px;height:1px;background:#2a2a2a;"></div><svg class="a" style="left:1707px;top:607px;" width="5" height="8" viewBox="0 0 5 8"><path d="M0.5 0.5L4 4L0.5 7.5" fill="none" stroke="#a0a0a0" stroke-width="1.1"/></svg><div id="t139" class="t" style="left:1718px;top:605.57px;font-size:11.5px;color:#c0c0c0;">Noise &amp; Grain</div><div class="a" style="left:1703px;top:636px;width:204px;height:1px;background:#2a2a2a;"></div><svg class="a" style="left:1707px;top:624px;" width="5" height="8" viewBox="0 0 5 8"><path d="M0.5 0.5L4 4L0.5 7.5" fill="none" stroke="#a0a0a0" stroke-width="1.1"/></svg><div id="t140" class="t" style="left:1718px;top:622.57px;font-size:11.5px;color:#c0c0c0;">Obsolete</div><div class="a" style="left:1703px;top:653px;width:204px;height:1px;background:#2a2a2a;"></div><svg class="a" style="left:1707px;top:641px;" width="5" height="8" viewBox="0 0 5 8"><path d="M0.5 0.5L4 4L0.5 7.5" fill="none" stroke="#a0a0a0" stroke-width="1.1"/></svg><div id="t141" class="t" style="left:1718px;top:639.57px;font-size:11.5px;color:#c0c0c0;">Perspective</div><div class="a" style="left:1703px;top:670px;width:204px;height:1px;background:#2a2a2a;"></div><svg class="a" style="left:1707px;top:658px;" width="5" height="8" viewBox="0 0 5 8"><path d="M0.5 0.5L4 4L0.5 7.5" fill="none" stroke="#a0a0a0" stroke-width="1.1"/></svg><div id="t142" class="t" style="left:1718px;top:656.57px;font-size:11.5px;color:#c0c0c0;">Red Giant</div><div class="a" style="left:1703px;top:687px;width:204px;height:1px;background:#2a2a2a;"></div><svg class="a" style="left:1707px;top:675px;" width="5" height="8" viewBox="0 0 5 8"><path d="M0.5 0.5L4 4L0.5 7.5" fill="none" stroke="#a0a0a0" stroke-width="1.1"/></svg><div id="t143" class="t" style="left:1718px;top:673.57px;font-size:11.5px;color:#c0c0c0;">RG Trapcode</div><div class="a" style="left:1908px;top:72px;width:9px;height:512px;background:#2c2c2c;border-radius:4px"></div><div class="a" style="left:1701px;top:686px;width:219px;height:1px;background:#161616;"></div><div class="a" style="left:0px;top:691px;width:1920px;height:349px;background:#232323;"></div><div class="a" style="left:0px;top:691px;width:1px;height:349px;background:#161616;"></div><div class="a" style="left:60px;top:699px;width:10px;height:10px;background:#6f7ee6;"></div><div id="t144" class="t" style="left:81px;top:699.07px;font-size:11.5px;color:#a4a4a4;">Tableta buna 2</div><div class="a" style="left:211px;top:699px;width:10px;height:10px;background:#9c5432;"></div><div id="t145" class="t" style="left:232px;top:699.07px;font-size:11.5px;color:#a4a4a4;">masca ecran Comp 1</div><div class="a" style="left:391px;top:699px;width:10px;height:10px;background:#c9343c;"></div><div id="t146" class="t" style="left:412px;top:699.07px;font-size:11.5px;color:#a4a4a4;">SECTIUNEA 5</div><div class="a" style="left:535px;top:699px;width:10px;height:10px;background:#c9343c;"></div><div id="t147" class="t" style="left:556px;top:699.07px;font-size:11.5px;color:#a4a4a4;">SECTIUNEA 4</div><div class="a" style="left:680px;top:699px;width:10px;height:10px;background:#c9343c;"></div><div id="t148" class="t" style="left:701px;top:699.07px;font-size:11.5px;color:#a4a4a4;">SECTIUNEA 2</div><div class="a" style="left:824px;top:699px;width:10px;height:10px;background:#c2ab83;"></div><div id="t149" class="t" style="left:845px;top:699.07px;font-size:11.5px;color:#a4a4a4;">intro1</div><div class="a" style="left:931px;top:699px;width:10px;height:10px;background:#8e3cb5;"></div><div id="t150" class="t" style="left:952px;top:699.07px;font-size:11.5px;color:#a4a4a4;">Beneficii 1</div><div class="a" style="left:1060px;top:699px;width:10px;height:10px;background:#c2ab83;"></div><div id="t151" class="t" style="left:1081px;top:699.07px;font-size:11.5px;color:#cfcfcf;">8_Valoarea medie a tranzactiilor pe zi (modifica perioada)</div><div class="a" style="left:1424px;top:699px;width:10px;height:10px;background:#c9343c;"></div><div id="t152" class="t" style="left:1445px;top:699.07px;font-size:11.5px;color:#a4a4a4;">01_Home page_1.jpg Comp 1</div><div class="a" style="left:1646px;top:699px;width:10px;height:10px;background:#c2ab83;"></div><div id="t153" class="t" style="left:1665px;top:699.07px;font-size:11.5px;color:#a4a4a4;">4.1.4</div><div class="a" style="left:1744px;top:699px;width:10px;height:10px;background:#c2ab83;"></div><div id="t154" class="t" style="left:1765px;top:699.07px;font-size:11.5px;color:#a4a4a4;">19_Clienții fideli versus</div><svg class="a" style="left:1045px;top:703px;" width="6" height="6" viewBox="0 0 6 6"><path d="M0.5 0.5L5.5 5.5M5.5 0.5L0.5 5.5" stroke="#a0a0a0" stroke-width="1"/></svg><svg class="a" style="left:1379px;top:701px;" width="9" height="8" viewBox="0 0 9 8"><path d="M0 0.5H9M0 4H9M0 7.5H9" stroke="#c8c8c8" stroke-width="1"/></svg><div class="a" style="left:1045px;top:715px;width:342px;height:2px;background:#d0d0d0;"></div><div class="a" style="left:1881px;top:697px;width:1px;height:16px;background:#2e2e2e;"></div><svg class="a" style="left:1906px;top:700px;" width="11" height="10" viewBox="0 0 11 10"><path d="M1 1L5 5L1 9M6 1L10 5L6 9" fill="none" stroke="#c8c8c8" stroke-width="1.6"/></svg><div id="t155" class="t" style="left:17px;top:723.83px;font-size:13.2px;color:#3d8ee8;font-weight:bold;">0:00:00:00</div><div id="t156" class="t" style="left:12px;top:739.39px;font-size:11px;color:#2a5d9e;">00000 (25.00 fps)</div><div class="a" style="left:107px;top:726px;width:634px;height:19px;background:#171717;border-radius:3px"></div><svg class="a" style="left:114px;top:729px;" width="18" height="13" viewBox="0 0 18 13"><circle cx="8" cy="5" r="3.6" fill="none" stroke="#b8b8b8" stroke-width="1.2"/><line x1="5.3" y1="7.7" x2="1.5" y2="11.5" stroke="#b8b8b8" stroke-width="1.4"/><path d="M12 8H17L14.5 10.5Z" fill="#b8b8b8"/></svg><svg class="a" style="left:753px;top:729px;" width="19" height="16" viewBox="0 0 19 16"><path d="M0 3H8M8 3V10H12M8 7H12" fill="none" stroke="#c4c4c4" stroke-width="1.3"/><rect x="12" y="1" width="5" height="4" fill="#c4c4c4"/><rect x="12" y="8" width="5" height="4" fill="#c4c4c4"/><path d="M13 13H17L15 15.5Z" fill="#c4c4c4"/></svg><svg class="a" style="left:786px;top:728px;" width="20" height="18" viewBox="0 0 20 18"><path d="M3 0L4 3L7 4L4 5L3 8L2 5L-1 4L2 3Z" fill="#c4c4c4"/><path d="M11 5L18 8.5V15L11 18L4 15V8.5Z" fill="none" stroke="#c4c4c4" stroke-width="1.2"/><path d="M4 8.5L11 12L18 8.5M11 12V18" fill="none" stroke="#c4c4c4" stroke-width="1.2"/></svg><svg class="a" style="left:821px;top:729px;" width="18" height="15" viewBox="0 0 18 15"><path d="M2 8A7 7 0 0 1 16 8Z" fill="#c4c4c4"/><rect x="8.3" y="2" width="1.4" height="12" fill="#232323"/><rect x="0" y="10" width="18" height="4" fill="#c4c4c4"/></svg><svg class="a" style="left:848px;top:729px;" width="16" height="16" viewBox="0 0 16 16"><rect x="0.6" y="3" width="11" height="12" fill="none" stroke="#c4c4c4" stroke-width="1.2"/><rect x="3" y="0.6" width="12" height="11.5" fill="#232323" stroke="#c4c4c4" stroke-width="1.2"/><path d="M5 3V10M8 3V10M11 3V10" stroke="#c4c4c4"/></svg><svg class="a" style="left:874px;top:729px;" width="17" height="16" viewBox="0 0 17 16"><circle cx="6" cy="10" r="5.2" fill="none" stroke="#c4c4c4" stroke-width="1.1"/><circle cx="9" cy="7.5" r="5.2" fill="none" stroke="#c4c4c4" stroke-width="1.1"/><circle cx="11" cy="6" r="5.2" fill="#c4c4c4"/></svg><svg class="a" style="left:907px;top:728px;" width="18" height="17" viewBox="0 0 18 17"><rect x="1.5" y="2.5" width="15" height="13" fill="none" stroke="#c4c4c4" stroke-width="1.2"/><path d="M3 5C7 5 10 13 15 13" fill="none" stroke="#c4c4c4" stroke-width="1.2"/><path d="M4 0V2.5M8 0V2.5M12 0V2.5" stroke="#c4c4c4"/></svg><div class="a" style="left:1px;top:754px;width:940px;height:1px;background:#0e0e0e;"></div><div class="a" style="left:1px;top:755px;width:940px;height:18px;background:#2a2a2a;"></div><div class="a" style="left:1px;top:773px;width:940px;height:1px;background:#0e0e0e;"></div><svg class="a" style="left:7px;top:762px;" width="12" height="8" viewBox="0 0 12 8"><path d="M0.5 4C2 1 4 0.5 6 0.5S10 1 11.5 4C10 7 8 7.5 6 7.5S2 7 0.5 4Z" fill="#c4c4c4"/><circle cx="6" cy="4" r="2" fill="#2a2a2a"/><circle cx="6" cy="4" r="0.9" fill="#c4c4c4"/></svg><svg class="a" style="left:22px;top:759px;" width="13" height="14" viewBox="0 0 13 14"><path d="M0 4.5H3L7 0.5V13.5L3 9.5H0Z" fill="#c4c4c4"/><path d="M9 3.5A4 4 0 0 1 9 10.5M10.5 1.5A6.5 6.5 0 0 1 10.5 12.5" fill="none" stroke="#c4c4c4" stroke-width="1.1"/></svg><svg class="a" style="left:39px;top:762px;" width="8" height="8" viewBox="0 0 8 8"><circle cx="4" cy="4" r="3.5" fill="#c4c4c4"/></svg><svg class="a" style="left:53px;top:759px;" width="10" height="12" viewBox="0 0 10 12"><path d="M2.5 5V3.5a2.5 2.5 0 0 1 5 0V5" fill="none" stroke="#c4c4c4" stroke-width="1.4"/><rect x="0.5" y="5" width="9" height="7" fill="#c4c4c4"/><rect x="4.3" y="7" width="1.4" height="3" fill="#2a2a2a"/></svg><div class="a" style="left:69px;top:758px;width:1px;height:12px;background:#555;"></div><div class="a" style="left:101px;top:758px;width:1px;height:12px;background:#555;"></div><div class="a" style="left:134px;top:758px;width:1px;height:12px;background:#555;"></div><div class="a" style="left:640px;top:758px;width:1px;height:12px;background:#555;"></div><div class="a" style="left:807px;top:758px;width:1px;height:12px;background:#555;"></div><div class="a" style="left:925px;top:758px;width:1px;height:12px;background:#555;"></div><svg class="a" style="left:83px;top:758px;" width="13" height="13" viewBox="0 0 13 13"><path d="M0.5 0.5H6L12.5 7L7 12.5L0.5 6Z" fill="#c4c4c4"/><circle cx="3.3" cy="3.3" r="1.2" fill="#2a2a2a"/></svg><div id="t157" class="t" style="left:107px;top:759.53px;font-size:10px;color:#a0a0a0;">#</div><div id="t158" class="t" style="left:122px;top:759.53px;font-size:10px;color:#a0a0a0;">.</div><div id="t159" class="t" style="left:140px;top:759.11px;font-size:10.5px;color:#a8a8a8;">Source Name</div><svg class="a" style="left:509px;top:758px;" width="13" height="13" viewBox="0 0 13 13"><path d="M2 8A4.5 4.5 0 0 1 11 8Z" fill="#c4c4c4"/><circle cx="4.8" cy="6" r="1" fill="#2a2a2a"/><circle cx="8.2" cy="6" r="1" fill="#2a2a2a"/><rect x="6" y="8" width="1.2" height="3" fill="#c4c4c4"/><rect x="0" y="8.5" width="13" height="1.3" fill="#c4c4c4"/><rect x="2" y="11" width="9" height="1.2" fill="#c4c4c4"/></svg><svg class="a" style="left:526px;top:759px;" width="10" height="10" viewBox="0 0 10 10"><circle cx="5" cy="5" r="2.2" fill="#c4c4c4"/><path d="M5 0V2M5 8V10M0 5H2M8 5H10M1.5 1.5L2.8 2.8M7.2 7.2L8.5 8.5M1.5 8.5L2.8 7.2M7.2 2.8L8.5 1.5" stroke="#c4c4c4"/></svg><svg class="a" style="left:539px;top:759px;" width="10" height="10" viewBox="0 0 10 10"><path d="M0.5 0.5L9.5 9.5" stroke="#c4c4c4" stroke-width="1.5" stroke-dasharray="2 1"/></svg><div id="t160" class="t" style="left:554px;top:757.84px;font-size:12px;color:#c4c4c4;font-family:"Liberation Serif",serif;"><i>fx</i></div><svg class="a" style="left:569px;top:758px;" width="12" height="12" viewBox="0 0 12 12"><rect x="0.5" y="0.5" width="11" height="11" fill="none" stroke="#c4c4c4"/><path d="M2 0V12M10 0V12M2 4H10M2 8H10" stroke="#c4c4c4"/></svg><svg class="a" style="left:584px;top:758px;" width="12" height="12" viewBox="0 0 12 12"><circle cx="5" cy="7" r="4.5" fill="none" stroke="#c4c4c4"/><circle cx="7" cy="5" r="4.5" fill="#c4c4c4"/></svg><svg class="a" style="left:599px;top:758px;" width="11" height="11" viewBox="0 0 11 11"><circle cx="5.5" cy="5.5" r="5" fill="none" stroke="#c4c4c4"/><path d="M5.5 0.5A5 5 0 0 1 5.5 10.5Z" fill="#c4c4c4"/><path d="M5.5 0.5A5 5 0 0 0 2 9Z" fill="#c4c4c4"/></svg><svg class="a" style="left:614px;top:757px;" width="12" height="13" viewBox="0 0 12 13"><path d="M6 0.5L11.5 3.5V9.5L6 12.5L0.5 9.5V3.5Z" fill="none" stroke="#c4c4c4" stroke-width="1.1"/><path d="M0.5 3.5L6 6.5L11.5 3.5M6 6.5V12.5" fill="none" stroke="#c4c4c4" stroke-width="1.1"/></svg><div id="t161" class="t" style="left:647px;top:759.11px;font-size:10.5px;color:#a0a0a0;">Mode</div><div id="t162" class="t" style="left:723px;top:759.11px;font-size:10.5px;color:#a0a0a0;">T</div><div id="t163" class="t" style="left:737px;top:759.11px;font-size:10.5px;color:#a0a0a0;">.TrkMat</div><div id="t164" class="t" style="left:813px;top:759.11px;font-size:10.5px;color:#a0a0a0;">Parent &amp; Link</div><div class="a" style="left:1px;top:774px;width:940px;height:16px;background:#2e2e2e;"></div><div class="a" style="left:1px;top:790px;width:940px;height:1px;background:#242424;"></div><div class="a" style="left:6px;top:775px;width:13px;height:14px;background:#1a1a1a;"></div><svg class="a" style="left:7px;top:778px;" width="12" height="8" viewBox="0 0 12 8"><path d="M0.5 4C2 1 4 0.5 6 0.5S10 1 11.5 4C10 7 8 7.5 6 7.5S2 7 0.5 4Z" fill="#c4c4c4"/><circle cx="6" cy="4" r="2" fill="#1a1a1a"/><circle cx="6" cy="4" r="0.9" fill="#c4c4c4"/></svg><div class="a" style="left:36px;top:775px;width:13px;height:14px;background:#222222;"></div><div class="a" style="left:51px;top:775px;width:13px;height:14px;background:#222222;"></div><svg class="a" style="left:76px;top:779px;" width="5" height="8" viewBox="0 0 5 8"><path d="M0.5 0.5L4 4L0.5 7.5" fill="none" stroke="#a0a0a0" stroke-width="1.1"/></svg><div class="a" style="left:87px;top:776px;width:12px;height:12px;background:#aaa7d2;"></div><div id="t165" class="t" style="left:108px;top:776.77px;font-size:11.5px;color:#c0c0c0;">1</div><svg class="a" style="left:140px;top:776px;" width="10" height="13" viewBox="0 0 10 13"><path d="M0.5 0.5H7L9.5 3V12.5H0.5Z" fill="#f0f0f0"/><path d="M1.5 5H8.5V11H1.5Z" fill="#1d67c8"/><path d="M2 10L5 7L8.5 10Z" fill="#6ab0f0"/></svg><div id="t166" class="t" style="left:157px;top:776.77px;font-size:11.5px;color:#c4c4c4;">8_Valoarea medie a tranzactiilor pe zi (ultimele 3 luni).png</div><svg class="a" style="left:509px;top:776px;" width="13" height="13" viewBox="0 0 13 13"><path d="M2 8A4.5 4.5 0 0 1 11 8Z" fill="#c4c4c4"/><circle cx="4.8" cy="6" r="1" fill="#2e2e2e"/><circle cx="8.2" cy="6" r="1" fill="#2e2e2e"/><rect x="6" y="8" width="1.2" height="3" fill="#c4c4c4"/><rect x="0" y="8.5" width="13" height="1.3" fill="#c4c4c4"/><rect x="2" y="11" width="9" height="1.2" fill="#c4c4c4"/></svg><div class="a" style="left:536px;top:775px;width:15px;height:14px;background:#262626;"></div><svg class="a" style="left:538px;top:777px;" width="11" height="11" viewBox="0 0 11 11"><path d="M0.5 10.5L10.5 0.5" stroke="#c4c4c4" stroke-width="1.3"/></svg><div class="a" style="left:584px;top:775px;width:13px;height:14px;background:#222222;"></div><div class="a" style="left:599px;top:775px;width:13px;height:14px;background:#222222;"></div><div class="a" style="left:614px;top:775px;width:13px;height:14px;background:#222222;"></div><div class="a" style="left:645px;top:775px;width:68px;height:14px;background:#222222;"></div><div id="t167" class="t" style="left:652px;top:776.77px;font-size:11.5px;color:#c4c4c4;">Normal</div><svg class="a" style="left:702px;top:780px;" width="8" height="5" viewBox="0 0 8 5"><path d="M0.5 0.5L4 4L7.5 0.5" fill="none" stroke="#b8b8b8" stroke-width="1.1"/></svg><div class="a" style="left:719px;top:775px;width:13px;height:14px;background:#222222;"></div><svg class="a" style="left:812px;top:776px;" width="13" height="13" viewBox="0 0 13 13"><path d="M4 11.5A5.5 5.5 0 1 1 11.8 8" fill="none" stroke="#c4c4c4" stroke-width="1.2"/><path d="M9 6.5A2.5 2.5 0 1 0 6.5 9" fill="none" stroke="#c4c4c4" stroke-width="1.2"/></svg><div class="a" style="left:831px;top:775px;width:88px;height:14px;background:#222222;"></div><div id="t168" class="t" style="left:838px;top:776.77px;font-size:11.5px;color:#c4c4c4;">None</div><svg class="a" style="left:906px;top:780px;" width="8" height="5" viewBox="0 0 8 5"><path d="M0.5 0.5L4 4L7.5 0.5" fill="none" stroke="#b8b8b8" stroke-width="1.1"/></svg><div class="a" style="left:1px;top:791px;width:940px;height:16px;background:#2e2e2e;"></div><div class="a" style="left:1px;top:807px;width:940px;height:1px;background:#242424;"></div><div class="a" style="left:6px;top:792px;width:13px;height:14px;background:#1a1a1a;"></div><svg class="a" style="left:7px;top:795px;" width="12" height="8" viewBox="0 0 12 8"><path d="M0.5 4C2 1 4 0.5 6 0.5S10 1 11.5 4C10 7 8 7.5 6 7.5S2 7 0.5 4Z" fill="#c4c4c4"/><circle cx="6" cy="4" r="2" fill="#1a1a1a"/><circle cx="6" cy="4" r="0.9" fill="#c4c4c4"/></svg><div class="a" style="left:36px;top:792px;width:13px;height:14px;background:#222222;"></div><div class="a" style="left:51px;top:792px;width:13px;height:14px;background:#222222;"></div><svg class="a" style="left:76px;top:796px;" width="5" height="8" viewBox="0 0 5 8"><path d="M0.5 0.5L4 4L0.5 7.5" fill="none" stroke="#a0a0a0" stroke-width="1.1"/></svg><div class="a" style="left:87px;top:793px;width:12px;height:12px;background:#aaa7d2;"></div><div id="t169" class="t" style="left:108px;top:793.77px;font-size:11.5px;color:#c0c0c0;">2</div><svg class="a" style="left:140px;top:793px;" width="10" height="13" viewBox="0 0 10 13"><path d="M0.5 0.5H7L9.5 3V12.5H0.5Z" fill="#f0f0f0"/><path d="M1.5 5H8.5V11H1.5Z" fill="#1d67c8"/><path d="M2 10L5 7L8.5 10Z" fill="#6ab0f0"/></svg><div id="t170" class="t" style="left:157px;top:793.77px;font-size:11.5px;color:#c4c4c4;">8_Valoarea medie a tranzactiilor pe zi (modifica perioada).png</div><svg class="a" style="left:509px;top:793px;" width="13" height="13" viewBox="0 0 13 13"><path d="M2 8A4.5 4.5 0 0 1 11 8Z" fill="#c4c4c4"/><circle cx="4.8" cy="6" r="1" fill="#2e2e2e"/><circle cx="8.2" cy="6" r="1" fill="#2e2e2e"/><rect x="6" y="8" width="1.2" height="3" fill="#c4c4c4"/><rect x="0" y="8.5" width="13" height="1.3" fill="#c4c4c4"/><rect x="2" y="11" width="9" height="1.2" fill="#c4c4c4"/></svg><div class="a" style="left:536px;top:792px;width:15px;height:14px;background:#262626;"></div><svg class="a" style="left:538px;top:794px;" width="11" height="11" viewBox="0 0 11 11"><path d="M0.5 10.5L10.5 0.5" stroke="#c4c4c4" stroke-width="1.3"/></svg><div class="a" style="left:584px;top:792px;width:13px;height:14px;background:#222222;"></div><div class="a" style="left:599px;top:792px;width:13px;height:14px;background:#222222;"></div><div class="a" style="left:614px;top:792px;width:13px;height:14px;background:#222222;"></div><div class="a" style="left:645px;top:792px;width:68px;height:14px;background:#222222;"></div><div id="t171" class="t" style="left:652px;top:793.77px;font-size:11.5px;color:#c4c4c4;">Normal</div><svg class="a" style="left:702px;top:797px;" width="8" height="5" viewBox="0 0 8 5"><path d="M0.5 0.5L4 4L7.5 0.5" fill="none" stroke="#b8b8b8" stroke-width="1.1"/></svg><div class="a" style="left:719px;top:792px;width:13px;height:14px;background:#222222;"></div><div class="a" style="left:738px;top:792px;width:64px;height:14px;background:#222222;"></div><div id="t172" class="t" style="left:745px;top:793.77px;font-size:11.5px;color:#c4c4c4;">None</div><svg class="a" style="left:790px;top:797px;" width="8" height="5" viewBox="0 0 8 5"><path d="M0.5 0.5L4 4L7.5 0.5" fill="none" stroke="#b8b8b8" stroke-width="1.1"/></svg><svg class="a" style="left:812px;top:793px;" width="13" height="13" viewBox="0 0 13 13"><path d="M4 11.5A5.5 5.5 0 1 1 11.8 8" fill="none" stroke="#c4c4c4" stroke-width="1.2"/><path d="M9 6.5A2.5 2.5 0 1 0 6.5 9" fill="none" stroke="#c4c4c4" stroke-width="1.2"/></svg><div class="a" style="left:831px;top:792px;width:88px;height:14px;background:#222222;"></div><div id="t173" class="t" style="left:838px;top:793.77px;font-size:11.5px;color:#c4c4c4;">None</div><svg class="a" style="left:906px;top:797px;" width="8" height="5" viewBox="0 0 8 5"><path d="M0.5 0.5L4 4L7.5 0.5" fill="none" stroke="#b8b8b8" stroke-width="1.1"/></svg><div class="a" style="left:1px;top:808px;width:940px;height:16px;background:#2e2e2e;"></div><div class="a" style="left:1px;top:824px;width:940px;height:1px;background:#242424;"></div><div class="a" style="left:6px;top:809px;width:13px;height:14px;background:#1a1a1a;"></div><svg class="a" style="left:7px;top:812px;" width="12" height="8" viewBox="0 0 12 8"><path d="M0.5 4C2 1 4 0.5 6 0.5S10 1 11.5 4C10 7 8 7.5 6 7.5S2 7 0.5 4Z" fill="#c4c4c4"/><circle cx="6" cy="4" r="2" fill="#1a1a1a"/><circle cx="6" cy="4" r="0.9" fill="#c4c4c4"/></svg><div class="a" style="left:36px;top:809px;width:13px;height:14px;background:#222222;"></div><div class="a" style="left:51px;top:809px;width:13px;height:14px;background:#222222;"></div><svg class="a" style="left:76px;top:813px;" width="5" height="8" viewBox="0 0 5 8"><path d="M0.5 0.5L4 4L0.5 7.5" fill="none" stroke="#a0a0a0" stroke-width="1.1"/></svg><div class="a" style="left:87px;top:810px;width:12px;height:12px;background:#aaa7d2;"></div><div id="t174" class="t" style="left:108px;top:810.77px;font-size:11.5px;color:#c0c0c0;">3</div><svg class="a" style="left:140px;top:810px;" width="10" height="13" viewBox="0 0 10 13"><path d="M0.5 0.5H7L9.5 3V12.5H0.5Z" fill="#f0f0f0"/><path d="M1.5 5H8.5V11H1.5Z" fill="#1d67c8"/><path d="M2 10L5 7L8.5 10Z" fill="#6ab0f0"/></svg><div id="t175" class="t" style="left:157px;top:810.77px;font-size:11.5px;color:#c4c4c4;">8_Valoarea medie a tranzactiilor pe saptamana (ultima luna).png</div><svg class="a" style="left:509px;top:810px;" width="13" height="13" viewBox="0 0 13 13"><path d="M2 8A4.5 4.5 0 0 1 11 8Z" fill="#c4c4c4"/><circle cx="4.8" cy="6" r="1" fill="#2e2e2e"/><circle cx="8.2" cy="6" r="1" fill="#2e2e2e"/><rect x="6" y="8" width="1.2" height="3" fill="#c4c4c4"/><rect x="0" y="8.5" width="13" height="1.3" fill="#c4c4c4"/><rect x="2" y="11" width="9" height="1.2" fill="#c4c4c4"/></svg><div class="a" style="left:536px;top:809px;width:15px;height:14px;background:#262626;"></div><svg class="a" style="left:538px;top:811px;" width="11" height="11" viewBox="0 0 11 11"><path d="M0.5 10.5L10.5 0.5" stroke="#c4c4c4" stroke-width="1.3"/></svg><div class="a" style="left:584px;top:809px;width:13px;height:14px;background:#222222;"></div><div class="a" style="left:599px;top:809px;width:13px;height:14px;background:#222222;"></div><div class="a" style="left:614px;top:809px;width:13px;height:14px;background:#222222;"></div><div class="a" style="left:645px;top:809px;width:68px;height:14px;background:#222222;"></div><div id="t176" class="t" style="left:652px;top:810.77px;font-size:11.5px;color:#c4c4c4;">Normal</div><svg class="a" style="left:702px;top:814px;" width="8" height="5" viewBox="0 0 8 5"><path d="M0.5 0.5L4 4L7.5 0.5" fill="none" stroke="#b8b8b8" stroke-width="1.1"/></svg><div class="a" style="left:719px;top:809px;width:13px;height:14px;background:#222222;"></div><div class="a" style="left:738px;top:809px;width:64px;height:14px;background:#222222;"></div><div id="t177" class="t" style="left:745px;top:810.77px;font-size:11.5px;color:#c4c4c4;">None</div><svg class="a" style="left:790px;top:814px;" width="8" height="5" viewBox="0 0 8 5"><path d="M0.5 0.5L4 4L7.5 0.5" fill="none" stroke="#b8b8b8" stroke-width="1.1"/></svg><svg class="a" style="left:812px;top:810px;" width="13" height="13" viewBox="0 0 13 13"><path d="M4 11.5A5.5 5.5 0 1 1 11.8 8" fill="none" stroke="#c4c4c4" stroke-width="1.2"/><path d="M9 6.5A2.5 2.5 0 1 0 6.5 9" fill="none" stroke="#c4c4c4" stroke-width="1.2"/></svg><div class="a" style="left:831px;top:809px;width:88px;height:14px;background:#222222;"></div><div id="t178" class="t" style="left:838px;top:810.77px;font-size:11.5px;color:#c4c4c4;">None</div><svg class="a" style="left:906px;top:814px;" width="8" height="5" viewBox="0 0 8 5"><path d="M0.5 0.5L4 4L7.5 0.5" fill="none" stroke="#b8b8b8" stroke-width="1.1"/></svg><div class="a" style="left:1px;top:825px;width:940px;height:16px;background:#2e2e2e;"></div><div class="a" style="left:1px;top:841px;width:940px;height:1px;background:#242424;"></div><div class="a" style="left:6px;top:826px;width:13px;height:14px;background:#1a1a1a;"></div><svg class="a" style="left:7px;top:829px;" width="12" height="8" viewBox="0 0 12 8"><path d="M0.5 4C2 1 4 0.5 6 0.5S10 1 11.5 4C10 7 8 7.5 6 7.5S2 7 0.5 4Z" fill="#c4c4c4"/><circle cx="6" cy="4" r="2" fill="#1a1a1a"/><circle cx="6" cy="4" r="0.9" fill="#c4c4c4"/></svg><div class="a" style="left:36px;top:826px;width:13px;height:14px;background:#222222;"></div><div class="a" style="left:51px;top:826px;width:13px;height:14px;background:#222222;"></div><svg class="a" style="left:76px;top:830px;" width="5" height="8" viewBox="0 0 5 8"><path d="M0.5 0.5L4 4L0.5 7.5" fill="none" stroke="#a0a0a0" stroke-width="1.1"/></svg><div class="a" style="left:87px;top:827px;width:12px;height:12px;background:#aaa7d2;"></div><div id="t179" class="t" style="left:108px;top:827.77px;font-size:11.5px;color:#c0c0c0;">4</div><svg class="a" style="left:140px;top:827px;" width="10" height="13" viewBox="0 0 10 13"><path d="M0.5 0.5H7L9.5 3V12.5H0.5Z" fill="#f0f0f0"/><path d="M1.5 5H8.5V11H1.5Z" fill="#1d67c8"/><path d="M2 10L5 7L8.5 10Z" fill="#6ab0f0"/></svg><div id="t180" class="t" style="left:157px;top:827.77px;font-size:11.5px;color:#c4c4c4;">8_Valoa…ctiilor pe saptamana (ultimele 6 luni - unitatile tale).png</div><svg class="a" style="left:509px;top:827px;" width="13" height="13" viewBox="0 0 13 13"><path d="M2 8A4.5 4.5 0 0 1 11 8Z" fill="#c4c4c4"/><circle cx="4.8" cy="6" r="1" fill="#2e2e2e"/><circle cx="8.2" cy="6" r="1" fill="#2e2e2e"/><rect x="6" y="8" width="1.2" height="3" fill="#c4c4c4"/><rect x="0" y="8.5" width="13" height="1.3" fill="#c4c4c4"/><rect x="2" y="11" width="9" height="1.2" fill="#c4c4c4"/></svg><div class="a" style="left:536px;top:826px;width:15px;height:14px;background:#262626;"></div><svg class="a" style="left:538px;top:828px;" width="11" height="11" viewBox="0 0 11 11"><path d="M0.5 10.5L10.5 0.5" stroke="#c4c4c4" stroke-width="1.3"/></svg><div class="a" style="left:584px;top:826px;width:13px;height:14px;background:#222222;"></div><div class="a" style="left:599px;top:826px;width:13px;height:14px;background:#222222;"></div><div class="a" style="left:614px;top:826px;width:13px;height:14px;background:#222222;"></div><div class="a" style="left:645px;top:826px;width:68px;height:14px;background:#222222;"></div><div id="t181" class="t" style="left:652px;top:827.77px;font-size:11.5px;color:#c4c4c4;">Normal</div><svg class="a" style="left:702px;top:831px;" width="8" height="5" viewBox="0 0 8 5"><path d="M0.5 0.5L4 4L7.5 0.5" fill="none" stroke="#b8b8b8" stroke-width="1.1"/></svg><div class="a" style="left:719px;top:826px;width:13px;height:14px;background:#222222;"></div><div class="a" style="left:738px;top:826px;width:64px;height:14px;background:#222222;"></div><div id="t182" class="t" style="left:745px;top:827.77px;font-size:11.5px;color:#c4c4c4;">None</div><svg class="a" style="left:790px;top:831px;" width="8" height="5" viewBox="0 0 8 5"><path d="M0.5 0.5L4 4L7.5 0.5" fill="none" stroke="#b8b8b8" stroke-width="1.1"/></svg><svg class="a" style="left:812px;top:827px;" width="13" height="13" viewBox="0 0 13 13"><path d="M4 11.5A5.5 5.5 0 1 1 11.8 8" fill="none" stroke="#c4c4c4" stroke-width="1.2"/><path d="M9 6.5A2.5 2.5 0 1 0 6.5 9" fill="none" stroke="#c4c4c4" stroke-width="1.2"/></svg><div class="a" style="left:831px;top:826px;width:88px;height:14px;background:#222222;"></div><div id="t183" class="t" style="left:838px;top:827.77px;font-size:11.5px;color:#c4c4c4;">None</div><svg class="a" style="left:906px;top:831px;" width="8" height="5" viewBox="0 0 8 5"><path d="M0.5 0.5L4 4L7.5 0.5" fill="none" stroke="#b8b8b8" stroke-width="1.1"/></svg><div class="a" style="left:1px;top:841px;width:940px;height:180px;background:#232323;"></div><div class="a" style="left:941px;top:724px;width:979px;height:1px;background:#0e0e0e;"></div><div class="a" style="left:941px;top:725px;width:960px;height:8px;background:#232323;"></div><div class="a" style="left:947px;top:725.5px;width:949px;height:7px;background:#6f6f6f;"></div><svg class="a" style="left:941px;top:725px;" width="8" height="8" viewBox="0 0 8 8"><path d="M7 0V8H4A4 4 0 0 1 4 0Z" fill="#3d8ee8"/></svg><svg class="a" style="left:1893px;top:725px;" width="8" height="8" viewBox="0 0 8 8"><path d="M0 0V8H3A4 4 0 0 0 3 0Z" fill="#3d8ee8"/></svg><div class="a" style="left:941px;top:733px;width:960px;height:1px;background:#0e0e0e;"></div><div class="a" style="left:941px;top:734px;width:960px;height:19px;background:#232323;"></div><div id="t184" class="t" style="left:953px;top:736.11px;font-size:10.5px;color:#b8b8b8;">0s</div><div id="t185" class="t" style="left:1033.0px;top:736.11px;font-size:10.5px;color:#b8b8b8;">01s</div><div class="a" style="left:1042px;top:748px;width:1px;height:5px;background:#9a9a9a;"></div><div id="t186" class="t" style="left:1127.7px;top:736.11px;font-size:10.5px;color:#b8b8b8;">02s</div><div class="a" style="left:1137px;top:748px;width:1px;height:5px;background:#9a9a9a;"></div><div id="t187" class="t" style="left:1222.4px;top:736.11px;font-size:10.5px;color:#b8b8b8;">03s</div><div class="a" style="left:1231px;top:748px;width:1px;height:5px;background:#9a9a9a;"></div><div id="t188" class="t" style="left:1317.1px;top:736.11px;font-size:10.5px;color:#b8b8b8;">04s</div><div class="a" style="left:1326px;top:748px;width:1px;height:5px;background:#9a9a9a;"></div><div id="t189" class="t" style="left:1411.8px;top:736.11px;font-size:10.5px;color:#b8b8b8;">05s</div><div class="a" style="left:1421px;top:748px;width:1px;height:5px;background:#9a9a9a;"></div><div id="t190" class="t" style="left:1506.5px;top:736.11px;font-size:10.5px;color:#b8b8b8;">06s</div><div class="a" style="left:1516px;top:748px;width:1px;height:5px;background:#9a9a9a;"></div><div id="t191" class="t" style="left:1601.1999999999998px;top:736.11px;font-size:10.5px;color:#b8b8b8;">07s</div><div class="a" style="left:1610px;top:748px;width:1px;height:5px;background:#9a9a9a;"></div><div id="t192" class="t" style="left:1695.9px;top:736.11px;font-size:10.5px;color:#b8b8b8;">08s</div><div class="a" style="left:1705px;top:748px;width:1px;height:5px;background:#9a9a9a;"></div><div id="t193" class="t" style="left:1790.6px;top:736.11px;font-size:10.5px;color:#b8b8b8;">09s</div><div class="a" style="left:1800px;top:748px;width:1px;height:5px;background:#9a9a9a;"></div><div id="t194" class="t" style="left:1885.3px;top:736.11px;font-size:10.5px;color:#b8b8b8;">10s</div><div class="a" style="left:1894px;top:748px;width:1px;height:5px;background:#9a9a9a;"></div><div class="a" style="left:941px;top:753px;width:979px;height:1px;background:#0e0e0e;"></div><div class="a" style="left:941px;top:754px;width:960px;height:16px;background:#232323;"></div><div class="a" style="left:947px;top:755px;width:951px;height:14px;background:#636363;"></div><svg class="a" style="left:941px;top:755px;" width="8" height="14" viewBox="0 0 8 14"><path d="M7 0V14H4A4 4 0 0 1 0 10V4A4 4 0 0 1 4 0Z" fill="#3d8ee8"/></svg><svg class="a" style="left:1893px;top:755px;" width="8" height="14" viewBox="0 0 8 14"><path d="M1 0V14H4A4 4 0 0 0 8 10V4A4 4 0 0 0 4 0Z" fill="#3d8ee8"/></svg><div class="a" style="left:941px;top:769.5px;width:960px;height:4px;background:#1a1a1a;"></div><div class="a" style="left:948px;top:770px;width:76px;height:3px;background:#25c22e;"></div><div class="a" style="left:1035px;top:770px;width:4px;height:3px;background:#25c22e;"></div><div class="a" style="left:1050px;top:770px;width:68px;height:3px;background:#25c22e;"></div><div class="a" style="left:1133px;top:770px;width:4px;height:3px;background:#25c22e;"></div><div class="a" style="left:1145px;top:770px;width:64px;height:3px;background:#25c22e;"></div><div class="a" style="left:1224px;top:770px;width:8px;height:3px;background:#25c22e;"></div><div class="a" style="left:1236px;top:770px;width:658px;height:3px;background:#25c22e;"></div><div class="a" style="left:941px;top:774px;width:960px;height:16px;background:#3b3b3b;"></div><div class="a" style="left:941px;top:790px;width:960px;height:1px;background:#232323;"></div><div class="a" style="left:941px;top:774px;width:7px;height:16px;background:#282828;"></div><div class="a" style="left:1209px;top:774px;width:692px;height:16px;background:#76758b;"></div><div class="a" style="left:941px;top:791px;width:960px;height:16px;background:#3b3b3b;"></div><div class="a" style="left:941px;top:807px;width:960px;height:1px;background:#232323;"></div><div class="a" style="left:941px;top:791px;width:7px;height:16px;background:#282828;"></div><div class="a" style="left:1118px;top:791px;width:783px;height:16px;background:#76758b;"></div><div class="a" style="left:941px;top:808px;width:960px;height:16px;background:#3b3b3b;"></div><div class="a" style="left:941px;top:824px;width:960px;height:1px;background:#232323;"></div><div class="a" style="left:941px;top:808px;width:7px;height:16px;background:#282828;"></div><div class="a" style="left:1024px;top:808px;width:877px;height:16px;background:#76758b;"></div><div class="a" style="left:941px;top:825px;width:960px;height:16px;background:#3b3b3b;"></div><div class="a" style="left:941px;top:841px;width:960px;height:1px;background:#232323;"></div><div class="a" style="left:941px;top:825px;width:7px;height:16px;background:#282828;"></div><div class="a" style="left:947px;top:825px;width:947px;height:16px;background:#76758b;"></div><div class="a" style="left:1894px;top:825px;width:7px;height:16px;background:#2e2e2e;"></div><div class="a" style="left:941px;top:841px;width:953px;height:180px;background:#333333;"></div><div class="a" style="left:1894px;top:841px;width:26px;height:180px;background:#262626;"></div><div class="a" style="left:941px;top:841px;width:7px;height:180px;background:#262626;"></div><div class="a" style="left:1901px;top:724px;width:19px;height:297px;background:#232323;"></div><svg class="a" style="left:1905px;top:754px;" width="12" height="16" viewBox="0 0 12 16"><path d="M0.5 0.5H11.5V11L6 15.5L0.5 11Z" fill="#c4c4c4"/></svg><svg class="a" style="left:1903px;top:776px;" width="14" height="13" viewBox="0 0 14 13"><path d="M1 7L7 1L9 3L4 8Z" fill="none" stroke="#c4c4c4" stroke-width="1.2"/><rect x="8" y="4" width="6" height="5" fill="#c4c4c4"/><circle cx="5" cy="10" r="2.2" fill="none" stroke="#c4c4c4" stroke-width="1.2"/></svg><div class="a" style="left:940px;top:773px;width:1px;height:248px;background:#0a0a0a;"></div><div class="a" style="left:947.5px;top:738px;width:1.5px;height:283px;background:#5b95d6;"></div><svg class="a" style="left:941px;top:737px;" width="14" height="16" viewBox="0 0 14 16"><path d="M0.5 0.5H13.5V8L7 15L0.5 8Z" fill="#3d8ee8"/></svg><div class="a" style="left:0px;top:1020px;width:1048px;height:1px;background:#0a0a0a;"></div><div class="a" style="left:0px;top:1021px;width:1920px;height:19px;background:#232323;"></div><svg class="a" style="left:6px;top:1023px;" width="14" height="14" viewBox="0 0 14 14"><rect x="1" y="1" width="7" height="7" fill="none" stroke="#3d8ee8" stroke-width="1.1"/><rect x="3.5" y="3.5" width="7" height="7" fill="#232323" stroke="#3d8ee8" stroke-width="1.1"/><rect x="6" y="6" width="7" height="7" fill="#232323" stroke="#3d8ee8" stroke-width="1.1"/></svg><svg class="a" style="left:25px;top:1023px;" width="14" height="14" viewBox="0 0 14 14"><circle cx="5" cy="5" r="4" fill="none" stroke="#3d8ee8" stroke-width="1.1"/><rect x="5.5" y="5.5" width="7" height="7" fill="#232323" stroke="#3d8ee8" stroke-width="1.1"/><path d="M5.5 5.5H9L5.5 9Z" fill="#3d8ee8"/></svg><svg class="a" style="left:44px;top:1024px;" width="12" height="12" viewBox="0 0 12 12"><path d="M3 0H9V3L11 6L9 9V12H3V9L1 6L3 3Z" fill="#b8b8b8"/></svg><svg class="a" style="left:946px;top:1026px;" width="10" height="6" viewBox="0 0 10 6"><path d="M0 6L3 2L5 4L7 0L10 6Z" fill="#c4c4c4"/></svg><svg class="a" style="left:966px;top:1025px;" width="12" height="12" viewBox="0 0 12 12"><circle cx="6" cy="6" r="4.5" fill="none" stroke="#b0b0b0" stroke-width="1.5"/></svg><div class="a" style="left:977px;top:1029px;width:38px;height:2px;background:#444;"></div><svg class="a" style="left:1026px;top:1025px;" width="18" height="8" viewBox="0 0 18 8"><path d="M0 8L4 3L6 5L11 0L17 8Z" fill="#c4c4c4"/></svg>
</body></html>
